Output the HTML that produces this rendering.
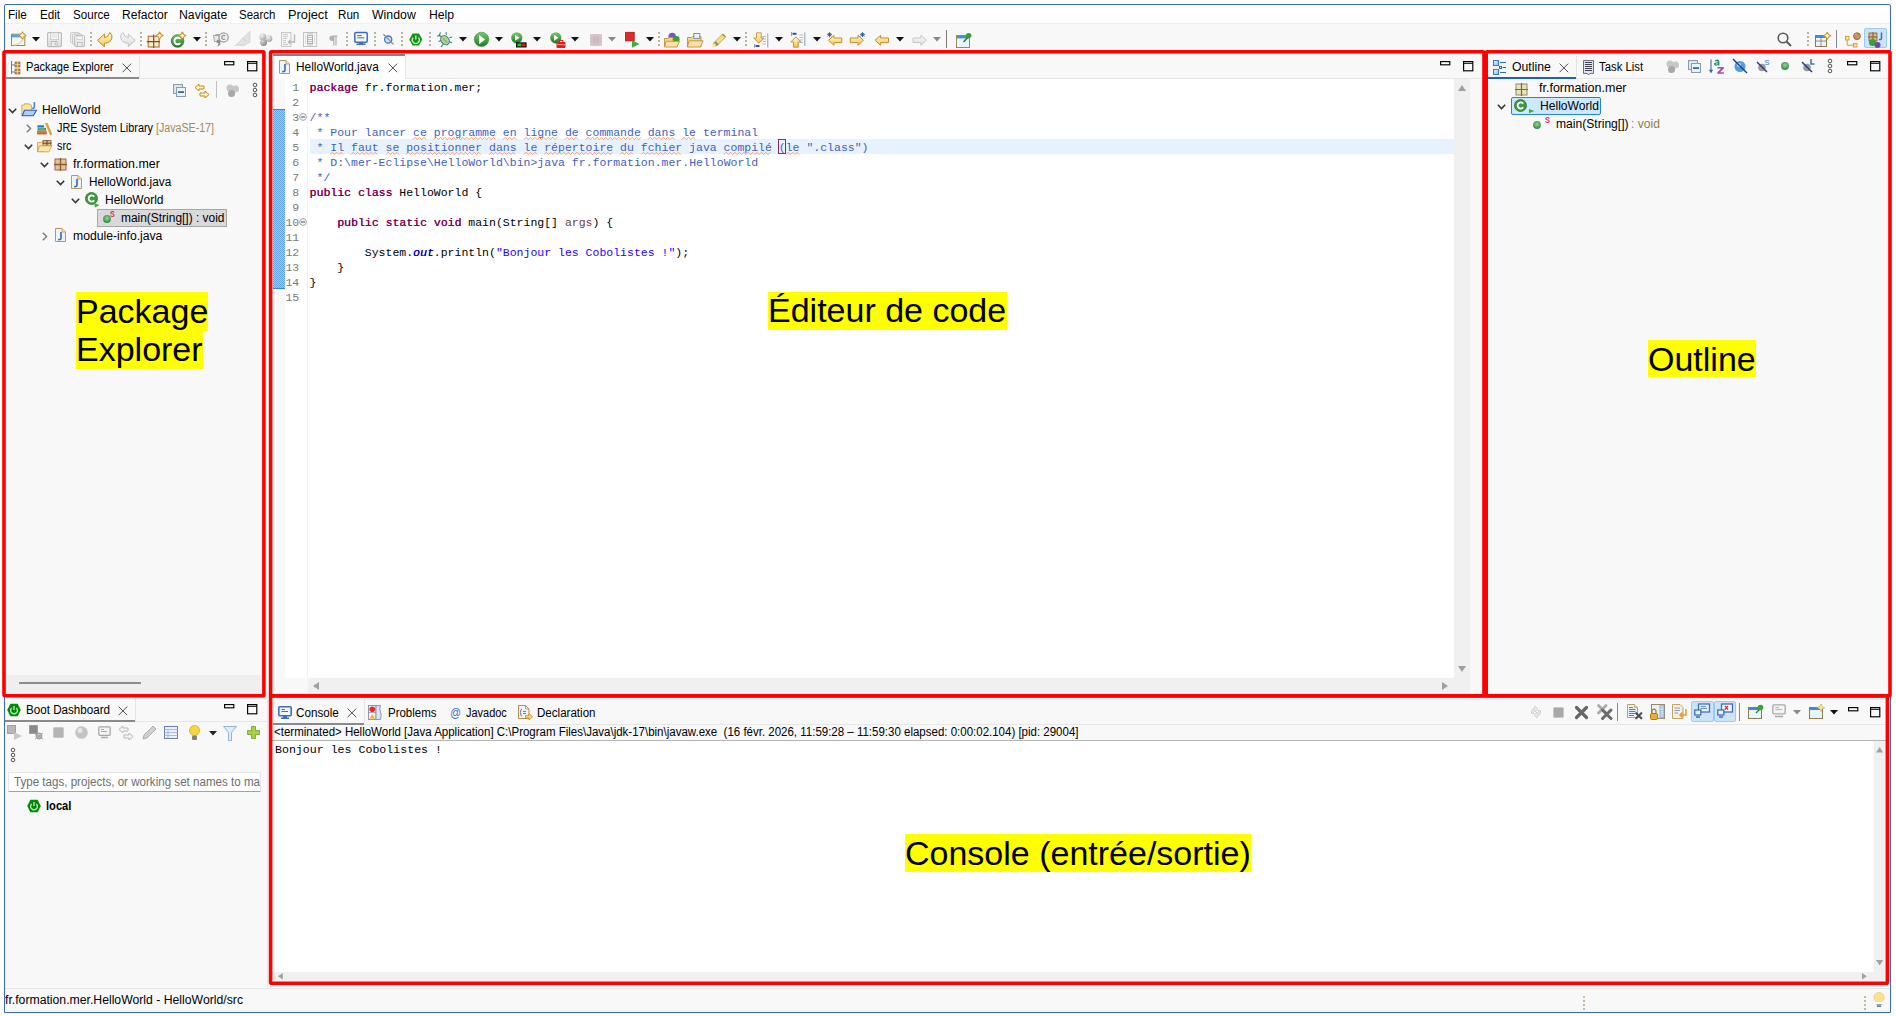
<!DOCTYPE html>
<html><head><meta charset="utf-8"><title>Eclipse</title>
<style>
html,body{margin:0;padding:0}
body{width:1896px;height:1016px;position:relative;overflow:hidden;background:#fff;font-family:'Liberation Sans',sans-serif}
.tx{position:absolute;white-space:pre;transform-origin:0 0}
svg{overflow:visible}
</style></head><body>
<div style="position:absolute;left:0px;top:0px;width:1896px;height:1016px;background:#fff;"></div>
<div style="position:absolute;left:5px;top:24px;width:1885px;height:988px;background:#f8f8f8;"></div>
<div style="position:absolute;left:5px;top:23px;width:1885px;height:1px;background:#efefef;"></div>
<div style="position:absolute;left:4px;top:4px;width:1887px;height:1009px;box-sizing:border-box;border:1px solid #3a6cb4;border-radius:2px 2px 0 0"></div>
<span id="t0" class="tx" style="transform:scaleX(0.9719);left:8.2px;top:7px;font-family:'Liberation Sans',sans-serif;font-size:12px;line-height:16px;color:#000;font-weight:normal;">File</span>
<span id="t1" class="tx" style="transform:scaleX(0.9716);left:39.7px;top:7px;font-family:'Liberation Sans',sans-serif;font-size:12px;line-height:16px;color:#000;font-weight:normal;">Edit</span>
<span id="t2" class="tx" style="transform:scaleX(0.9676);left:73.1px;top:7px;font-family:'Liberation Sans',sans-serif;font-size:12px;line-height:16px;color:#000;font-weight:normal;">Source</span>
<span id="t3" class="tx" style="transform:scaleX(1.0097);left:122.2px;top:7px;font-family:'Liberation Sans',sans-serif;font-size:12px;line-height:16px;color:#000;font-weight:normal;">Refactor</span>
<span id="t4" class="tx" style="transform:scaleX(1.0195);left:179.2px;top:7px;font-family:'Liberation Sans',sans-serif;font-size:12px;line-height:16px;color:#000;font-weight:normal;">Navigate</span>
<span id="t5" class="tx" style="transform:scaleX(0.9545);left:239.2px;top:7px;font-family:'Liberation Sans',sans-serif;font-size:12px;line-height:16px;color:#000;font-weight:normal;">Search</span>
<span id="t6" class="tx" style="transform:scaleX(1.0653);left:287.6px;top:7px;font-family:'Liberation Sans',sans-serif;font-size:12px;line-height:16px;color:#000;font-weight:normal;">Project</span>
<span id="t7" class="tx" style="transform:scaleX(0.9675);left:337.6px;top:7px;font-family:'Liberation Sans',sans-serif;font-size:12px;line-height:16px;color:#000;font-weight:normal;">Run</span>
<span id="t8" class="tx" style="transform:scaleX(1.0261);left:371.8px;top:7px;font-family:'Liberation Sans',sans-serif;font-size:12px;line-height:16px;color:#000;font-weight:normal;">Window</span>
<span id="t9" class="tx" style="transform:scaleX(1.0167);left:429.3px;top:7px;font-family:'Liberation Sans',sans-serif;font-size:12px;line-height:16px;color:#000;font-weight:normal;">Help</span>
<svg width="0" height="0" style="position:absolute"><defs><linearGradient id="gy" x1="0" y1="0" x2="0" y2="1"><stop offset="0" stop-color="#fff7d8"/><stop offset="1" stop-color="#f7c64a"/></linearGradient><linearGradient id="gg" x1="0" y1="0" x2="0" y2="1"><stop offset="0" stop-color="#7cc86a"/><stop offset="1" stop-color="#1f7a2a"/></linearGradient><linearGradient id="ggray" x1="0" y1="0" x2="0" y2="1"><stop offset="0" stop-color="#fafafa"/><stop offset="1" stop-color="#dcdcdc"/></linearGradient><radialGradient id="gball" cx="0.35" cy="0.3" r="0.8"><stop offset="0" stop-color="#f2f2f2"/><stop offset="1" stop-color="#a0a0a0"/></radialGradient><radialGradient id="gball2" cx="0.35" cy="0.3" r="0.8"><stop offset="0" stop-color="#d8d8d8"/><stop offset="1" stop-color="#7a7a7a"/></radialGradient></defs></svg>
<svg style="position:absolute;left:11px;top:32px" width="16" height="16" viewBox="0 0 16 16"><rect x="0.5" y="2.2" width="13.3" height="11.3" fill="#eef7fd" stroke="#9a8a5a" stroke-width="1"/><path d="M3 13 Q10 12.5 12.5 6" stroke="#f3dc90" stroke-width="1.6" fill="none"/><rect x="1" y="2.7" width="12.3" height="2.6" fill="#3f8fd6"/><path d="M1.5 4 H10" stroke="#7cc0f0" stroke-width=".8"/><path d="M11.4 -0.20000000000000018 Q12.3 2.5 15.0 3.4 Q12.3 4.3 11.4 7.0 Q10.5 4.3 7.800000000000001 3.4 Q10.5 2.5 11.4 -0.20000000000000018Z" fill="#fff6d0" stroke="#c49a3a" stroke-width="1.1" stroke-linejoin="round"/></svg>
<svg style="position:absolute;left:32px;top:37px" width="8" height="5" viewBox="0 0 8 5"><path d="M0 0 L8 0 L4 4.5Z" fill="#111"/></svg>
<svg style="position:absolute;left:47px;top:32px" width="16" height="16" viewBox="0 0 16 16"><rect x="0.6" y="0.6" width="13.8" height="14.2" rx="1.2" fill="url(#ggray)" stroke="#b9b9b9" stroke-width="1.1"/><rect x="3.4" y="0.8" width="7.9" height="6.9" fill="#f6f6f6" stroke="#c4c4c4" stroke-width=".8"/><path d="M4.8 2.8 H10 M4.8 4.8 H10" stroke="#d2d2d2" stroke-width=".7"/><rect x="4.2" y="9.5" width="5.8" height="5" fill="#eeeeee" stroke="#b4b4b4" stroke-width=".8"/><path d="M8.2 10.5 V13.5" stroke="#a8a8a8" stroke-width=".8"/></svg>
<svg style="position:absolute;left:70px;top:32px" width="16" height="16" viewBox="0 0 16 16"><rect x="0.6" y="0.6" width="9" height="10" rx="1" fill="#f2f2f2" stroke="#c4c4c4" stroke-width=".9"/><rect x="2.6" y="2.1" width="9" height="10.5" rx="1" fill="#f2f2f2" stroke="#c0c0c0" stroke-width=".9"/><rect x="4.6" y="3.6" width="10" height="11" rx="1" fill="url(#ggray)" stroke="#b4b4b4" stroke-width=".9"/><rect x="7" y="4" width="5.5" height="3.6" fill="#f8f8f8" stroke="#c4c4c4" stroke-width=".7"/><rect x="7.6" y="10.6" width="4.4" height="3.8" fill="#eee" stroke="#b4b4b4" stroke-width=".7"/></svg>
<svg style="position:absolute;left:90px;top:32.4px" width="2" height="16" viewBox="0 0 2 16"><rect x="0" y="0" width="2" height="2" fill="#bdb29c"/><rect x="0" y="4" width="2" height="2" fill="#bdb29c"/><rect x="0" y="8" width="2" height="2" fill="#bdb29c"/><rect x="0" y="12" width="2" height="2" fill="#bdb29c"/></svg>
<svg style="position:absolute;left:97px;top:32px" width="16" height="16" viewBox="0 0 16 16"><path d="M0.5 8.4 L7.4 2 V5.6 Q11 6 12.8 0.5 Q15.6 2 14.9 6.2 Q13.8 10.8 7.4 11.3 V14.7 Z" fill="url(#gy)" stroke="#bf8a28" stroke-width="1" stroke-linejoin="round"/></svg>
<svg style="position:absolute;left:119.5px;top:32px" width="16" height="16" viewBox="0 0 16 16"><path d="M15.2 8.4 L8.3 2 V5.6 Q4.7 6 2.9 0.5 Q0.1 2 0.8 6.2 Q1.9 10.8 8.3 11.3 V14.7 Z" fill="url(#ggray)" stroke="#c2c2c2" stroke-width="1" stroke-linejoin="round"/></svg>
<svg style="position:absolute;left:140px;top:32.4px" width="2" height="16" viewBox="0 0 2 16"><rect x="0" y="0" width="2" height="2" fill="#bdb29c"/><rect x="0" y="4" width="2" height="2" fill="#bdb29c"/><rect x="0" y="8" width="2" height="2" fill="#bdb29c"/><rect x="0" y="12" width="2" height="2" fill="#bdb29c"/></svg>
<svg style="position:absolute;left:147px;top:32px" width="16" height="16" viewBox="0 0 16 16"><rect x="1.2" y="4.2" width="11" height="10.8" fill="#ecd7a8" stroke="#b5784a" stroke-width="1.1"/><rect x="2.5" y="5.5" width="3.6" height="3.6" fill="#fbeec6"/><rect x="7.4" y="5.5" width="3.6" height="3.6" fill="#fbeec6"/><rect x="2.5" y="10.3" width="3.6" height="3.6" fill="#fbeec6"/><rect x="7.4" y="10.3" width="3.6" height="3.6" fill="#fbeec6"/><path d="M6.7 2.5 V16 M-0.2 9.6 H13" stroke="#7d4a28" stroke-width="1.1"/><path d="M12.6 0.0 Q13.5 2.7 16.2 3.6 Q13.5 4.5 12.6 7.2 Q11.7 4.5 9.0 3.6 Q11.7 2.7 12.6 0.0Z" fill="#fff6d0" stroke="#c49a3a" stroke-width="1.1" stroke-linejoin="round"/></svg>
<svg style="position:absolute;left:170px;top:32px" width="16" height="16" viewBox="0 0 16 16"><circle cx="7.6" cy="9" r="6.3" fill="url(#gg)" stroke="#1f6a2a" stroke-width=".7"/><path d="M10.3 6.9 A3.3 3.3 0 1 0 10.3 11.1" stroke="#fff" stroke-width="2" fill="none"/><path d="M12.3 0.0 Q13.200000000000001 2.7 15.9 3.6 Q13.200000000000001 4.5 12.3 7.2 Q11.4 4.5 8.700000000000001 3.6 Q11.4 2.7 12.3 0.0Z" fill="#fff6d0" stroke="#c49a3a" stroke-width="1.1" stroke-linejoin="round"/></svg>
<svg style="position:absolute;left:192.5px;top:37px" width="8" height="5" viewBox="0 0 8 5"><path d="M0 0 L8 0 L4 4.5Z" fill="#111"/></svg>
<svg style="position:absolute;left:204.7px;top:32.4px" width="2" height="16" viewBox="0 0 2 16"><rect x="0" y="0" width="2" height="2" fill="#bdb29c"/><rect x="0" y="4" width="2" height="2" fill="#bdb29c"/><rect x="0" y="8" width="2" height="2" fill="#bdb29c"/><rect x="0" y="12" width="2" height="2" fill="#bdb29c"/></svg>
<svg style="position:absolute;left:212.6px;top:32px" width="16" height="16" viewBox="0 0 16 16"><path d="M0.5 3.5 H6 V9.5 H1.5Z" fill="#e8e8e8" stroke="#a6a6a6" stroke-width="1"/><path d="M1 4 L3 2.5 H7" stroke="#a6a6a6" fill="none"/><path d="M4 8 H9 L6.5 11.5 H8.5 L4.5 15 L5.5 11 H3.5Z" fill="#8c8c8c"/><circle cx="10.6" cy="5.4" r="4.6" fill="#f2f2f2" stroke="#a0a0a0" stroke-width="1.3"/><path d="M12.2 4 A2 2 0 1 0 12.2 6.8" stroke="#909090" stroke-width="1.2" fill="none"/></svg>
<svg style="position:absolute;left:234px;top:31px" width="17" height="16" viewBox="0 0 17 16"><path d="M2 13.8 L9 7 L16 0 V11 L11 14 Z" fill="#e2e2e2" stroke="#d2d2d2" stroke-width=".8"/><path d="M0 14.3 H11" stroke="#dadada" stroke-width="1"/><path d="M9 7 L12 10.5" stroke="#cfcfcf"/></svg>
<svg style="position:absolute;left:258.8px;top:33px" width="14" height="14" viewBox="0 0 14 14"><circle cx="3.8" cy="4" r="3.4" fill="url(#gball)"/><circle cx="10" cy="5.6" r="3.4" fill="url(#gball)"/><circle cx="4.6" cy="9.6" r="3.4" fill="url(#gball2)"/></svg>
<svg style="position:absolute;left:280.6px;top:32px" width="16" height="16" viewBox="0 0 16 16"><rect x="0.5" y="0.5" width="9.5" height="14" fill="#f6f6f6" stroke="#c6c6c6"/><path d="M2 2.5 H7 M2 4.5 H7 M2 6.5 H6 M2 8.5 H5 M2 10.5 H5 M2 12.5 H7" stroke="#bdbdbd" stroke-width=".8"/><path d="M13.5 2.5 V10 H7.5 M9.5 8 L7.5 10 L9.5 12" stroke="#b8b8b8" stroke-width="1.4" fill="none"/></svg>
<svg style="position:absolute;left:303px;top:32px" width="16" height="16" viewBox="0 0 16 16"><rect x="0.5" y="0.5" width="13.2" height="14" fill="#f7f7f7" stroke="#c4c4c4"/><path d="M2.5 2.5 V12.5 M11.5 2.5 V12.5" stroke="#c8c8c8" stroke-dasharray="1 1"/><rect x="4.5" y="3.5" width="5" height="8" fill="none" stroke="#b0b0b0"/><path d="M5 5.5 H9 M5 7.5 H9 M5 9.5 H9" stroke="#bdbdbd"/><path d="M4 1.8 H10 M4 13 H10" stroke="#c0c0c0"/></svg>
<svg style="position:absolute;left:328.5px;top:34.8px" width="9" height="11" viewBox="0 0 9 11"><path d="M4.2 0.5 H8.5 V1.8 H7.6 V10.5 H6.4 V1.8 H5.4 V10.5 H4.2 V6 Q0.3 6 0.3 3.2 Q0.3 0.5 4.2 0.5Z" fill="#b2b2b2"/></svg>
<svg style="position:absolute;left:345.8px;top:32.4px" width="2" height="16" viewBox="0 0 2 16"><rect x="0" y="0" width="2" height="2" fill="#bdb29c"/><rect x="0" y="4" width="2" height="2" fill="#bdb29c"/><rect x="0" y="8" width="2" height="2" fill="#bdb29c"/><rect x="0" y="12" width="2" height="2" fill="#bdb29c"/></svg>
<svg style="position:absolute;left:354px;top:32px" width="16" height="16" viewBox="0 0 16 16"><rect x="0.8" y="0.6" width="12.4" height="9.6" rx="1.2" fill="#f4f8fd" stroke="#3d6db8" stroke-width="1.5"/><path d="M3.2 3.6 H7.8 M3.2 5.8 H10.3" stroke="#3d6db8" stroke-width="1"/><path d="M5 10.2 H9 V11.6 H11.5 V13 H2.5 V11.6 H5Z" fill="#3d6db8"/></svg>
<svg style="position:absolute;left:373.5px;top:32.4px" width="2" height="16" viewBox="0 0 2 16"><rect x="0" y="0" width="2" height="2" fill="#bdb29c"/><rect x="0" y="4" width="2" height="2" fill="#bdb29c"/><rect x="0" y="8" width="2" height="2" fill="#bdb29c"/><rect x="0" y="12" width="2" height="2" fill="#bdb29c"/></svg>
<svg style="position:absolute;left:382px;top:32px" width="16" height="16" viewBox="0 0 16 16"><circle cx="6.2" cy="7.6" r="3.6" fill="#d6e8f8" stroke="#3a7ac0" stroke-width="1.3"/><path d="M1.4 2.3 L11.5 12.4" stroke="#8a8a8a" stroke-width="1.3"/></svg>
<svg style="position:absolute;left:401px;top:32.4px" width="2" height="16" viewBox="0 0 2 16"><rect x="0" y="0" width="2" height="2" fill="#bdb29c"/><rect x="0" y="4" width="2" height="2" fill="#bdb29c"/><rect x="0" y="8" width="2" height="2" fill="#bdb29c"/><rect x="0" y="12" width="2" height="2" fill="#bdb29c"/></svg>
<svg style="position:absolute;left:409px;top:32.7px" width="14" height="14" viewBox="0 0 14 14"><path d="M0.3 6.5 L3.6 0.6 H10 L13.3 6.5 L10 12.6 H3.6Z" fill="#139413"/><path d="M4.2 4.6 A3.5 3.5 0 1 0 9.4 4.6" stroke="#cdf0cd" stroke-width="1.3" fill="none"/><path d="M6.8 2.6 V6.6" stroke="#cdf0cd" stroke-width="1.3"/></svg>
<svg style="position:absolute;left:428.5px;top:32.4px" width="2" height="16" viewBox="0 0 2 16"><rect x="0" y="0" width="2" height="2" fill="#bdb29c"/><rect x="0" y="4" width="2" height="2" fill="#bdb29c"/><rect x="0" y="8" width="2" height="2" fill="#bdb29c"/><rect x="0" y="12" width="2" height="2" fill="#bdb29c"/></svg>
<svg style="position:absolute;left:437px;top:32px" width="16" height="16" viewBox="0 0 16 16"><ellipse cx="8" cy="8.2" rx="3.8" ry="5" transform="rotate(-40 8 8.2)" fill="#b5d68a" stroke="#2f7f80" stroke-width="1"/><path d="M6 6 L10 10.5" stroke="#7fb060" stroke-width="1.2"/><path d="M4.3 4.6 L2.2 3.4 L0.2 4.2 M4.2 8.5 L1.6 9.6 M6 12.2 L4 15 M9.4 2.8 L9 0.2 M12.4 5.8 L15 5 M12.3 9.4 L14.8 11 M2.2 3.4 L3.5 0.6" stroke="#2f7f80" stroke-width="1.1" fill="none"/></svg>
<svg style="position:absolute;left:458.5px;top:37px" width="8" height="5" viewBox="0 0 8 5"><path d="M0 0 L8 0 L4 4.5Z" fill="#111"/></svg>
<svg style="position:absolute;left:474.4px;top:31.8px" width="16" height="16" viewBox="0 0 16 16"><circle cx="7.5" cy="7.4" r="7.2" fill="url(#gg)" stroke="#2a7a2a" stroke-width=".5"/><path d="M5 3 L11.2 7.6 L5 12.2Z" fill="#fff"/></svg>
<svg style="position:absolute;left:495px;top:37px" width="8" height="5" viewBox="0 0 8 5"><path d="M0 0 L8 0 L4 4.5Z" fill="#111"/></svg>
<svg style="position:absolute;left:511px;top:32px" width="16" height="16" viewBox="0 0 16 16"><circle cx="5.8" cy="5.8" r="5.6" fill="url(#gg)"/><path d="M4 2.8 L8.6 5.8 L4 8.8Z" fill="#fff"/><rect x="5" y="10.3" width="10.6" height="5.2" fill="#111"/><rect x="6.3" y="11.5" width="4" height="2.8" fill="#25c025"/><rect x="10.6" y="11.5" width="3.8" height="2.8" fill="#e01a1a"/></svg>
<svg style="position:absolute;left:533.2px;top:37px" width="8" height="5" viewBox="0 0 8 5"><path d="M0 0 L8 0 L4 4.5Z" fill="#111"/></svg>
<svg style="position:absolute;left:549.5px;top:32px" width="16" height="16" viewBox="0 0 16 16"><circle cx="5.8" cy="5.8" r="5.6" fill="url(#gg)"/><path d="M4 2.8 L8.6 5.8 L4 8.8Z" fill="#fff"/><rect x="6.5" y="10" width="9" height="6" rx="1" fill="#e41c1c"/><path d="M7 12.6 H15" stroke="#ffb0b0" stroke-width=".8"/><rect x="9.5" y="8.4" width="3.4" height="2.2" fill="none" stroke="#e41c1c" stroke-width="1"/></svg>
<svg style="position:absolute;left:571px;top:37px" width="8" height="5" viewBox="0 0 8 5"><path d="M0 0 L8 0 L4 4.5Z" fill="#111"/></svg>
<svg style="position:absolute;left:589.5px;top:34px" width="12" height="12" viewBox="0 0 12 12"><rect x="0.8" y="0.8" width="10.4" height="10.4" fill="#d8c8cc" stroke="#c6b8bc" stroke-width="1"/><rect x="2.5" y="2.5" width="7" height="7" fill="#cdb8bd"/></svg>
<svg style="position:absolute;left:608px;top:37px" width="8" height="5" viewBox="0 0 8 5"><path d="M0 0 L8 0 L4 4.5Z" fill="#8a8a8a"/></svg>
<svg style="position:absolute;left:624.5px;top:32px" width="16" height="16" viewBox="0 0 16 16"><rect x="0.6" y="0.3" width="8.6" height="8.6" fill="#e02a2a" stroke="#a81616" stroke-width=".8"/><path d="M7 8.2 L14.5 12 L7 15.8Z" fill="#3ab03a"/></svg>
<svg style="position:absolute;left:645.5px;top:37px" width="8" height="5" viewBox="0 0 8 5"><path d="M0 0 L8 0 L4 4.5Z" fill="#111"/></svg>
<svg style="position:absolute;left:657.7px;top:32.4px" width="2" height="16" viewBox="0 0 2 16"><rect x="0" y="0" width="2" height="2" fill="#bdb29c"/><rect x="0" y="4" width="2" height="2" fill="#bdb29c"/><rect x="0" y="8" width="2" height="2" fill="#bdb29c"/><rect x="0" y="12" width="2" height="2" fill="#bdb29c"/></svg>
<svg style="position:absolute;left:664px;top:32px" width="16" height="16" viewBox="0 0 16 16"><circle cx="8.2" cy="4.5" r="3.8" fill="#7a5ab8"/><circle cx="12.4" cy="7.2" r="3.2" fill="#3aa03a"/><path d="M0.5 6.5 H4.5 L5.5 5.5 H9 V14.5 H0.5Z" fill="#f5d590" stroke="#b8862a" stroke-width=".8"/><path d="M2 9.3 H15.5 L13 15 H0.5Z" fill="#fbe3a4" stroke="#b8862a" stroke-width=".8"/></svg>
<svg style="position:absolute;left:686.5px;top:32px" width="16" height="16" viewBox="0 0 16 16"><path d="M0.5 5.5 H4.5 L5.5 4.5 H14 V14.5 H0.5Z" fill="#f5d590" stroke="#b8862a" stroke-width=".8"/><rect x="6.8" y="1.5" width="6" height="4.8" fill="#eef4fb" stroke="#6a86b8" stroke-width=".9"/><path d="M2 8.8 H16 L13.5 15 H0.5Z" fill="#fbe3a4" stroke="#b8862a" stroke-width=".8"/></svg>
<svg style="position:absolute;left:710.5px;top:32px" width="16" height="16" viewBox="0 0 16 16"><path d="M1.5 14.5 L3 10.5 L11.5 2 L14.5 5 L6 13.5Z" fill="#f3dc8a" stroke="#c8a040" stroke-width=".9"/><path d="M4 10 L7 13" stroke="#8a8a8a" stroke-width="2.2"/><path d="M11.5 2 L14.5 5" stroke="#b48a30" stroke-width="1.4"/><circle cx="2" cy="14" r="2" fill="#fff6b0" opacity=".8"/></svg>
<svg style="position:absolute;left:732.5px;top:37px" width="8" height="5" viewBox="0 0 8 5"><path d="M0 0 L8 0 L4 4.5Z" fill="#111"/></svg>
<svg style="position:absolute;left:745px;top:32.4px" width="2" height="16" viewBox="0 0 2 16"><rect x="0" y="0" width="2" height="2" fill="#bdb29c"/><rect x="0" y="4" width="2" height="2" fill="#bdb29c"/><rect x="0" y="8" width="2" height="2" fill="#bdb29c"/><rect x="0" y="12" width="2" height="2" fill="#bdb29c"/></svg>
<svg style="position:absolute;left:754px;top:32px" width="16" height="16" viewBox="0 0 16 16"><path d="M2.5 0.8 H7.2 V6 H10 L4.9 11.2 L-0.2 6 H2.5Z" fill="url(#gy)" stroke="#c28f2a" stroke-width=".9"/><path d="M8.5 4.5 H12 M8.5 7 H12 M8.5 9.5 H12 M8.5 12 H12" stroke="#9ab0c8" stroke-width=".8"/><path d="M13.8 1.5 V15.5" stroke="#8aa0b8" stroke-width="1"/><rect x="1.5" y="13" width="4" height="2" fill="#1f5aa0"/><path d="M0.5 12 V15.5" stroke="#8aa0b8"/></svg>
<svg style="position:absolute;left:775px;top:37px" width="8" height="5" viewBox="0 0 8 5"><path d="M0 0 L8 0 L4 4.5Z" fill="#111"/></svg>
<svg style="position:absolute;left:790.5px;top:32px" width="16" height="16" viewBox="0 0 16 16"><path d="M2.5 15.2 H7.2 V10 H10 L4.9 4.8 L-0.2 10 H2.5Z" fill="url(#gy)" stroke="#c28f2a" stroke-width=".9"/><path d="M8.5 3 H12 M8.5 5.5 H12 M8.5 8 H12 M8.5 10.5 H12" stroke="#9ab0c8" stroke-width=".8"/><path d="M13.8 0.5 V14" stroke="#8aa0b8" stroke-width="1"/><rect x="1.5" y="0.8" width="4" height="2" fill="#1f5aa0"/><path d="M0.5 0 V4" stroke="#8aa0b8"/></svg>
<svg style="position:absolute;left:812.5px;top:37px" width="8" height="5" viewBox="0 0 8 5"><path d="M0 0 L8 0 L4 4.5Z" fill="#111"/></svg>
<svg style="position:absolute;left:826.5px;top:32px" width="16" height="16" viewBox="0 0 16 16"><path d="M1.5 8.3 L7 3.3 V6 H14.8 V10.6 H7 V13.3Z" fill="url(#gy)" stroke="#c28f2a" stroke-width="1" stroke-linejoin="round"/><path d="M0.8 1 L4.2 4.4 M4.2 1 L0.8 4.4 M2.5 0.2 V5.2 M0 2.7 H5" stroke="#2a5a9a" stroke-width=".9"/></svg>
<svg style="position:absolute;left:849px;top:32px" width="16" height="16" viewBox="0 0 16 16"><path d="M14.5 8.3 L9 3.3 V6 H1.2 V10.6 H9 V13.3Z" fill="url(#gy)" stroke="#c28f2a" stroke-width="1" stroke-linejoin="round"/><path d="M11.8 1 L15.2 4.4 M15.2 1 L11.8 4.4 M13.5 0.2 V5.2 M11 2.7 H16" stroke="#2a5a9a" stroke-width=".9"/></svg>
<svg style="position:absolute;left:873.5px;top:32px" width="16" height="16" viewBox="0 0 16 16"><path d="M1 8.3 L6.6 3.3 V6 H14.5 V10.6 H6.6 V13.3Z" fill="url(#gy)" stroke="#c28f2a" stroke-width="1" stroke-linejoin="round"/></svg>
<svg style="position:absolute;left:895.5px;top:37px" width="8" height="5" viewBox="0 0 8 5"><path d="M0 0 L8 0 L4 4.5Z" fill="#111"/></svg>
<svg style="position:absolute;left:911.5px;top:32px" width="16" height="16" viewBox="0 0 16 16"><path d="M14.5 8.3 L8.9 3.3 V6 H1 V10.6 H8.9 V13.3Z" fill="url(#ggray)" stroke="#c6c6c6" stroke-width="1" stroke-linejoin="round"/></svg>
<svg style="position:absolute;left:932.5px;top:37px" width="8" height="5" viewBox="0 0 8 5"><path d="M0 0 L8 0 L4 4.5Z" fill="#8a8a8a"/></svg>
<div style="position:absolute;left:946px;top:30px;width:1px;height:18px;background:#7a7a7a;"></div>
<svg style="position:absolute;left:955.5px;top:32px" width="16" height="16" viewBox="0 0 16 16"><rect x="0.5" y="3.5" width="13" height="12" fill="#eaf4fc" stroke="#9a8a5a"/><rect x="1" y="4" width="12" height="2.4" fill="#3f8fd6"/><path d="M7.5 10 L12.2 5" stroke="#2a7a2a" stroke-width="1.4"/><ellipse cx="12.6" cy="3.6" rx="2.9" ry="2.6" fill="#35a035"/></svg>
<svg style="position:absolute;left:1777px;top:32px" width="16" height="16" viewBox="0 0 16 16"><circle cx="6" cy="6" r="4.8" fill="none" stroke="#5a5a5a" stroke-width="1.6"/><path d="M9.5 9.5 L14 14" stroke="#5a5a5a" stroke-width="2"/></svg>
<svg style="position:absolute;left:1807px;top:32.4px" width="2" height="16" viewBox="0 0 2 16"><rect x="0" y="0" width="2" height="2" fill="#bdb29c"/><rect x="0" y="4" width="2" height="2" fill="#bdb29c"/><rect x="0" y="8" width="2" height="2" fill="#bdb29c"/><rect x="0" y="12" width="2" height="2" fill="#bdb29c"/></svg>
<svg style="position:absolute;left:1815px;top:32px" width="16" height="16" viewBox="0 0 16 16"><rect x="0.5" y="3.5" width="11" height="11" fill="#eaf4fc" stroke="#8a7a50"/><rect x="1" y="4" width="10" height="2" fill="#3f8fd6"/><path d="M0.5 9 H11.5 M6 6 V14.5" stroke="#8a7a50" stroke-width=".8"/><path d="M12.2 0.19999999999999973 Q13.1 2.9 15.799999999999999 3.8 Q13.1 4.7 12.2 7.4 Q11.299999999999999 4.7 8.6 3.8 Q11.299999999999999 2.9 12.2 0.19999999999999973Z" fill="#fff6d0" stroke="#c49a3a" stroke-width="1.1" stroke-linejoin="round"/></svg>
<div style="position:absolute;left:1836px;top:30px;width:1px;height:18px;background:#8a8a8a;"></div>
<svg style="position:absolute;left:1845px;top:32px" width="16" height="16" viewBox="0 0 16 16"><rect x="0.5" y="4.5" width="3.5" height="3.5" fill="#fde18a" stroke="#c8952a" stroke-width=".8"/><rect x="8.5" y="11.5" width="3.5" height="3.5" fill="#fde18a" stroke="#c8952a" stroke-width=".8"/><path d="M2.2 8 V13.2 H8.5" stroke="#c8952a" stroke-width=".9" fill="none"/><ellipse cx="12" cy="4.2" rx="3.5" ry="3.5" fill="#c88a50" stroke="#8a5a2a" stroke-width=".7"/><path d="M9.8 2 L14 6.5 M10.5 1.2 L14.8 5.5" stroke="#e8b888" stroke-width=".5"/></svg>
<div style="position:absolute;left:1864.4px;top:27.9px;width:22.2px;height:20.1px;box-sizing:border-box;background:#cce4f7;border:1px solid #99ccf2;border-radius:2px"></div>
<svg style="position:absolute;left:1868px;top:32px" width="16" height="16" viewBox="0 0 16 16"><rect x="1" y="1" width="8" height="8" fill="#d8b88a" stroke="#8a5a2a" stroke-width=".8"/><path d="M5 0 V9 M0 5 H9" stroke="#8a5a2a" stroke-width="1"/><path d="M13.5 0.5 V6 Q13.5 8 11 7.5" stroke="#3a70c0" stroke-width="1.5" fill="none"/><circle cx="4.5" cy="10.5" r="3.5" fill="#3aa03a"/><circle cx="9.5" cy="13" r="3" fill="#6a4ab0"/></svg>
<div style="position:absolute;left:5px;top:78px;width:257px;height:1px;background:#e6e6e6;"></div>
<div style="position:absolute;left:139px;top:56px;width:1px;height:22px;background:#e4e4e4;"></div>
<div style="position:absolute;left:6px;top:77px;width:133px;height:2px;background:#8a8a8a;"></div>
<svg style="position:absolute;left:10px;top:60px" width="10" height="13" viewBox="0 0 10 13"><path d="M1.5 1 V14 M1.5 5 H5 M1.5 12 H5" stroke="#6b7b90" stroke-width="1" fill="none"/><rect x="5" y="2" width="5" height="5" fill="#c78a4a" stroke="#8f5a28" stroke-width=".6"/><rect x="5" y="9" width="5" height="5" fill="#c78a4a" stroke="#8f5a28" stroke-width=".6"/><path d="M7.5 2 V7 M5 4.5 H10 M7.5 9 V14 M5 11.5 H10" stroke="#f3d8a8" stroke-width=".7"/></svg>
<span id="t10" class="tx" style="transform:scaleX(0.9238);left:25.5px;top:59px;font-family:'Liberation Sans',sans-serif;font-size:12px;line-height:16px;color:#000;font-weight:normal;">Package Explorer</span>
<svg style="position:absolute;left:122px;top:63.1px" width="10" height="10" viewBox="0 0 10 10"><path d="M0.6 0.6 L9.2 9.2 M9.2 0.6 L0.6 9.2" stroke="#444" stroke-width="0.95" fill="none"/></svg>
<svg style="position:absolute;left:224px;top:61px" width="11" height="5" viewBox="0 0 11 5"><rect x="0.6" y="0.6" width="9.2" height="3.2" fill="#fff" stroke="#000" stroke-width="1.15"/></svg>
<svg style="position:absolute;left:247px;top:61px" width="11" height="11" viewBox="0 0 11 11"><rect x="0.6" y="0.6" width="9.2" height="9.2" fill="#f8f8f8" stroke="#000" stroke-width="1.15"/><rect x="0.6" y="1.8" width="9.2" height="1" fill="#000"/></svg>
<svg style="position:absolute;left:173px;top:84px" width="13" height="13" viewBox="0 0 13 13"><rect x="0.5" y="0.5" width="9" height="9" fill="#dfe7ee" stroke="#8a9bb0"/><rect x="3.5" y="3.5" width="9" height="9" fill="#e8f3f6" stroke="#8a9bb0"/><rect x="5" y="7.3" width="6" height="1.6" fill="#1f5a99"/></svg>
<svg style="position:absolute;left:194px;top:83px" width="16" height="16" viewBox="0 0 16 16"><path d="M1 4.5 L5 1 V3 H10 V6 H5 V8Z" fill="#fff3c4" stroke="#c08a2a" stroke-width="1"/><path d="M15 11.5 L11 15 V13 H6 V10 H11 V8Z" fill="#fff3c4" stroke="#c08a2a" stroke-width="1"/></svg>
<div style="position:absolute;left:216px;top:81px;width:1px;height:17px;background:#bdbdbd;"></div>
<svg style="position:absolute;left:226px;top:84px" width="13" height="13" viewBox="0 0 13 13"><circle cx="4" cy="4" r="3.5" fill="#c8c8c8"/><circle cx="9.5" cy="5" r="3.5" fill="#c8c8c8"/><circle cx="5.5" cy="9.5" r="3.5" fill="#a8a8a8"/></svg>
<svg style="position:absolute;left:252px;top:82px" width="6" height="16" viewBox="0 0 6 16"><g fill="none" stroke="#555" stroke-width="1"><circle cx="3" cy="3" r="1.8"/><circle cx="3" cy="8" r="1.8"/><circle cx="3" cy="13" r="1.8"/></g></svg>
<svg style="position:absolute;left:8px;top:108px" width="9" height="6" viewBox="0 0 9 6"><path d="M0.8 0.8 L4.5 4.6 L8.2 0.8" fill="none" stroke="#333" stroke-width="1.5"/></svg>
<svg style="position:absolute;left:20.5px;top:102px" width="17" height="15" viewBox="0 0 17 15"><path d="M0.8 3 H3 L4 1.8 H8 L9 3 H10.5 V13.5 H0.8Z" fill="#fbe3a0" stroke="#c9a45a" stroke-width=".8"/><path d="M3 1.8 H8.5" stroke="#e8c070" stroke-width="1.2"/><path d="M3.5 8.2 H15.6 L12.2 13.8 H1.2Z" fill="#a8d4f8" stroke="#3558c0" stroke-width="1.1" stroke-linejoin="round"/><path d="M13.4 0 V4.8 Q13.4 6.6 11 6.3" stroke="#5a8ac8" stroke-width="1.7" fill="none"/></svg>
<span id="t11" class="tx" style="transform:scaleX(1.0057);left:41.5px;top:102px;font-family:'Liberation Sans',sans-serif;font-size:12px;line-height:16px;color:#000;font-weight:normal;">HelloWorld</span>
<svg style="position:absolute;left:25.6px;top:124px" width="6" height="9" viewBox="0 0 6 9"><path d="M0.8 0.8 L4.6 4.5 L0.8 8.2" fill="none" stroke="#777" stroke-width="1.3"/></svg>
<svg style="position:absolute;left:37px;top:122.6px" width="15" height="13" viewBox="0 0 15 13"><rect x="0.3" y="2.3" width="6.8" height="2.2" rx=".6" fill="#2a7ad0"/><rect x="0.6" y="4.8" width="8.4" height="2.8" fill="#2aa060"/><path d="M1.5 6 H8" stroke="#9ad8b0" stroke-width=".6"/><rect x="0" y="7.6" width="9.8" height="3.8" fill="#d8783a"/><path d="M0.5 10.6 H9.5" stroke="#b05a20" stroke-width=".7"/><path d="M8.6 0.6 L10.2 0.2 L14.8 11.2 L13.4 11.8Z" fill="#f0b030" stroke="#c08020" stroke-width=".6"/></svg>
<span id="t12" class="tx" style="transform:scaleX(0.9054);left:57px;top:120px;font-family:'Liberation Sans',sans-serif;font-size:12px;line-height:16px;color:#000;font-weight:normal;">JRE System Library</span>
<span id="t13" class="tx" style="transform:scaleX(0.8872);left:155.5px;top:120px;font-family:'Liberation Sans',sans-serif;font-size:12px;line-height:16px;color:#9e8a63;font-weight:normal;">[JavaSE-17]</span>
<svg style="position:absolute;left:24px;top:144px" width="9" height="6" viewBox="0 0 9 6"><path d="M0.8 0.8 L4.5 4.6 L8.2 0.8" fill="none" stroke="#333" stroke-width="1.5"/></svg>
<svg style="position:absolute;left:37.2px;top:140.2px" width="15" height="13" viewBox="0 0 15 13"><path d="M0.5 2.5 H4 L5 1.5 H7 V11.5 H0.5Z" fill="#fbe3a4" stroke="#c59a48" stroke-width=".8"/><rect x="6" y="0.5" width="8" height="5.5" fill="#dcc08a" stroke="#8a5a30" stroke-width=".8"/><path d="M10 0 V6.5 M5.5 3.2 H14.5" stroke="#6a4020" stroke-width="1"/><path d="M2.5 5.8 H14.8 L12 11.8 H0.5Z" fill="#fde6ac" stroke="#c59a48" stroke-width=".8" stroke-linejoin="round"/></svg>
<span id="t14" class="tx" style="transform:scaleX(0.9062);left:57px;top:138px;font-family:'Liberation Sans',sans-serif;font-size:12px;line-height:16px;color:#000;font-weight:normal;">src</span>
<svg style="position:absolute;left:40px;top:162px" width="9" height="6" viewBox="0 0 9 6"><path d="M0.8 0.8 L4.5 4.6 L8.2 0.8" fill="none" stroke="#333" stroke-width="1.5"/></svg>
<svg style="position:absolute;left:54px;top:158px" width="13" height="13" viewBox="0 0 13 13"><rect x="1" y="1" width="11" height="11" fill="#e2c49a" stroke="#a0683a" stroke-width="1"/><path d="M6.5 0 V13 M0 6.5 H13" stroke="#8c5a30" stroke-width="1.3"/></svg>
<span id="t15" class="tx" style="transform:scaleX(1.0329);left:73px;top:156px;font-family:'Liberation Sans',sans-serif;font-size:12px;line-height:16px;color:#000;font-weight:normal;">fr.formation.mer</span>
<svg style="position:absolute;left:56px;top:180px" width="9" height="6" viewBox="0 0 9 6"><path d="M0.8 0.8 L4.5 4.6 L8.2 0.8" fill="none" stroke="#333" stroke-width="1.5"/></svg>
<svg style="position:absolute;left:71px;top:175px" width="11" height="14" viewBox="0 0 11 14"><path d="M0.5 0.5 H7 L10.5 4 V13.5 H0.5Z" fill="#eef3fb" stroke="#b49a5a" stroke-width="1"/><path d="M7 0.5 V4 H10.5" fill="#f0e0b0" stroke="#b49a5a" stroke-width=".8"/><path d="M6 4 V10 Q6 12 3.2 11.5" stroke="#2f6db5" stroke-width="1.6" fill="none"/></svg>
<span id="t16" class="tx" style="transform:scaleX(0.9808);left:88.8px;top:174px;font-family:'Liberation Sans',sans-serif;font-size:12px;line-height:16px;color:#000;font-weight:normal;">HelloWorld.java</span>
<svg style="position:absolute;left:71px;top:198px" width="9" height="6" viewBox="0 0 9 6"><path d="M0.8 0.8 L4.5 4.6 L8.2 0.8" fill="none" stroke="#333" stroke-width="1.5"/></svg>
<svg style="position:absolute;left:84.5px;top:192px" width="15" height="15" viewBox="0 0 15 15"><circle cx="6.5" cy="6.5" r="6" fill="#3c9b3c" stroke="#2a702a" stroke-width=".8"/><path d="M9.2 4.6 A3.1 3.1 0 1 0 9.2 8.4" stroke="#fff" stroke-width="1.8" fill="none"/><path d="M9 11 L14.5 13 L10 15.5Z" fill="#3cae3c"/></svg>
<span id="t17" class="tx" style="left:105px;top:192px;font-family:'Liberation Sans',sans-serif;font-size:12px;line-height:16px;color:#000;font-weight:normal;">HelloWorld</span>
<div style="position:absolute;left:97px;top:209px;width:130px;height:18px;box-sizing:border-box;background:#d9d9d9;border:1px solid #a6a6a6"></div>
<svg style="position:absolute;left:103px;top:215px" width="9" height="9" viewBox="0 0 9 9"><defs><radialGradient id="gb" cx="0.5" cy="0.4" r="0.6"><stop offset="0" stop-color="#a6d08a"/><stop offset="1" stop-color="#1f8a4a"/></radialGradient></defs><circle cx="4" cy="4" r="3.9" fill="url(#gb)"/></svg>
<span id="t18" class="tx" style="transform:scaleX(0.7567);left:109.7px;top:207.2px;font-family:'Liberation Sans',sans-serif;font-size:9.5px;line-height:13px;color:#d8305a;font-weight:bold;">S</span>
<span id="t19" class="tx" style="transform:scaleX(0.9947);left:120.6px;top:210px;font-family:'Liberation Sans',sans-serif;font-size:12px;line-height:16px;color:#000;font-weight:normal;">main(String[]) : void</span>
<svg style="position:absolute;left:42px;top:232px" width="6" height="9" viewBox="0 0 6 9"><path d="M0.8 0.8 L4.6 4.5 L0.8 8.2" fill="none" stroke="#777" stroke-width="1.3"/></svg>
<svg style="position:absolute;left:55px;top:228px" width="11" height="14" viewBox="0 0 11 14"><path d="M0.5 0.5 H7 L10.5 4 V13.5 H0.5Z" fill="#eef3fb" stroke="#b49a5a" stroke-width="1"/><path d="M7 0.5 V4 H10.5" fill="#f0e0b0" stroke="#b49a5a" stroke-width=".8"/><path d="M6 4 V10 Q6 12 3.2 11.5" stroke="#2f6db5" stroke-width="1.6" fill="none"/></svg>
<span id="t20" class="tx" style="transform:scaleX(1.0152);left:73px;top:228px;font-family:'Liberation Sans',sans-serif;font-size:12px;line-height:16px;color:#000;font-weight:normal;">module-info.java</span>
<div style="position:absolute;left:6px;top:675px;width:256px;height:19px;background:#efefef;"></div>
<div style="position:absolute;left:19px;top:682px;width:122px;height:2px;background:#8c8c8c;"></div>
<div style="position:absolute;left:272px;top:54px;width:1210px;height:25px;background:#f8f8f8;"></div>
<div style="position:absolute;left:272px;top:78px;width:1210px;height:1px;background:#e6e6e6;"></div>
<div style="position:absolute;left:272.8px;top:54px;width:132px;height:25px;background:#fff;"></div>
<div style="position:absolute;left:272.8px;top:54px;width:132px;height:2px;background:#7f8486;"></div>
<div style="position:absolute;left:404.5px;top:56px;width:1px;height:22px;background:#e8e8e8;"></div>
<svg style="position:absolute;left:279px;top:60px" width="12" height="14" viewBox="0 0 12 14"><path d="M0.5 0.5 H7 L10.5 4 V13.5 H0.5Z" fill="#eef3fb" stroke="#b49a5a" stroke-width="1"/><path d="M7 0.5 V4 H10.5" fill="#f0e0b0" stroke="#b49a5a" stroke-width=".8"/><path d="M6 4 V10 Q6 12 3.2 11.5" stroke="#2f6db5" stroke-width="1.6" fill="none"/></svg>
<span id="t21" class="tx" style="transform:scaleX(0.9879);left:296px;top:59px;font-family:'Liberation Sans',sans-serif;font-size:12px;line-height:16px;color:#000;font-weight:normal;">HelloWorld.java</span>
<svg style="position:absolute;left:388px;top:63.2px" width="10" height="10" viewBox="0 0 10 10"><path d="M0.6 0.6 L9.2 9.2 M9.2 0.6 L0.6 9.2" stroke="#444" stroke-width="0.95" fill="none"/></svg>
<svg style="position:absolute;left:1440px;top:61px" width="11" height="5" viewBox="0 0 11 5"><rect x="0.6" y="0.6" width="9.2" height="3.2" fill="#fff" stroke="#000" stroke-width="1.15"/></svg>
<svg style="position:absolute;left:1463px;top:61px" width="11" height="11" viewBox="0 0 11 11"><rect x="0.6" y="0.6" width="9.2" height="9.2" fill="#f8f8f8" stroke="#000" stroke-width="1.15"/><rect x="0.6" y="1.8" width="9.2" height="1" fill="#000"/></svg>
<div style="position:absolute;left:272px;top:79px;width:1182px;height:599px;background:#fff;"></div>
<div style="position:absolute;left:272px;top:79px;width:13px;height:615px;background:#f8f8f8;"></div>
<div style="position:absolute;left:307px;top:79px;width:1px;height:599px;background:#f2f2f2;"></div>
<svg style="position:absolute;left:273px;top:109px" width="12" height="180"><defs><pattern id="qd" width="2" height="2" patternUnits="userSpaceOnUse"><rect width="2" height="2" fill="#a9cdf0"/><rect width="1" height="1" fill="#5fa0e0"/><rect x="1" y="1" width="1" height="1" fill="#5fa0e0"/></pattern></defs><rect width="12" height="180" fill="url(#qd)"/><rect width="12" height="1" fill="#3b86d8"/><rect y="179" width="12" height="1" fill="#3b86d8"/></svg>
<div style="position:absolute;left:310.3px;top:139px;width:1144px;height:15px;background:#e8f2fe;"></div>
<span id="t22" class="tx" style="left:292.3px;top:80px;font-family:'Liberation Mono',monospace;font-size:11.5px;line-height:15px;color:#787878;font-weight:normal;">1</span>
<span id="t23" class="tx" style="left:309.6px;top:80px;font-family:'Liberation Mono',monospace;font-size:11.5px;line-height:15px;color:#7f0055;font-weight:normal;text-shadow:0.25px 0 0 #7f0055;">package</span>
<span id="t24" class="tx" style="left:357.90000000000003px;top:80px;font-family:'Liberation Mono',monospace;font-size:11.5px;line-height:15px;color:#000;font-weight:normal;"> fr.formation.mer;</span>
<span id="t25" class="tx" style="left:292.3px;top:95px;font-family:'Liberation Mono',monospace;font-size:11.5px;line-height:15px;color:#787878;font-weight:normal;">2</span>
<span id="t26" class="tx" style="left:292.3px;top:110px;font-family:'Liberation Mono',monospace;font-size:11.5px;line-height:15px;color:#787878;font-weight:normal;">3</span>
<span id="t27" class="tx" style="left:309.6px;top:110px;font-family:'Liberation Mono',monospace;font-size:11.5px;line-height:15px;color:#3f5fbf;font-weight:normal;">/**</span>
<span id="t28" class="tx" style="left:292.3px;top:125px;font-family:'Liberation Mono',monospace;font-size:11.5px;line-height:15px;color:#787878;font-weight:normal;">4</span>
<span id="t29" class="tx" style="left:309.6px;top:125px;font-family:'Liberation Mono',monospace;font-size:11.5px;line-height:15px;color:#3f5fbf;font-weight:normal;"> * Pour lancer </span>
<span id="t30" class="tx" style="left:413.1px;top:125px;font-family:'Liberation Mono',monospace;font-size:11.5px;line-height:15px;color:#3f5fbf;font-weight:normal;">ce</span>
<svg style="position:absolute;left:413.1px;top:137.0px" width="14.8" height="3" viewBox="0 0 14.8 3"><polyline points="0.0 2.6 2.2 0.3 4.4 2.6 6.6 0.3 8.8 2.6 11.0 0.3 13.2 2.6" fill="none" stroke="#f39060" stroke-width="0.85"/></svg>
<span id="t31" class="tx" style="left:426.90000000000003px;top:125px;font-family:'Liberation Mono',monospace;font-size:11.5px;line-height:15px;color:#3f5fbf;font-weight:normal;"> </span>
<span id="t32" class="tx" style="left:433.8px;top:125px;font-family:'Liberation Mono',monospace;font-size:11.5px;line-height:15px;color:#3f5fbf;font-weight:normal;">programme</span>
<svg style="position:absolute;left:433.8px;top:137.0px" width="63.1" height="3" viewBox="0 0 63.1 3"><polyline points="0.0 2.6 2.2 0.3 4.4 2.6 6.6 0.3 8.8 2.6 11.0 0.3 13.2 2.6 15.4 0.3 17.6 2.6 19.8 0.3 22.0 2.6 24.2 0.3 26.4 2.6 28.6 0.3 30.8 2.6 33.0 0.3 35.2 2.6 37.4 0.3 39.6 2.6 41.8 0.3 44.0 2.6 46.2 0.3 48.4 2.6 50.6 0.3 52.8 2.6 55.0 0.3 57.2 2.6 59.4 0.3 61.6 2.6" fill="none" stroke="#f39060" stroke-width="0.85"/></svg>
<span id="t33" class="tx" style="left:495.90000000000003px;top:125px;font-family:'Liberation Mono',monospace;font-size:11.5px;line-height:15px;color:#3f5fbf;font-weight:normal;"> </span>
<span id="t34" class="tx" style="left:502.80000000000007px;top:125px;font-family:'Liberation Mono',monospace;font-size:11.5px;line-height:15px;color:#3f5fbf;font-weight:normal;">en</span>
<svg style="position:absolute;left:502.80000000000007px;top:137.0px" width="14.8" height="3" viewBox="0 0 14.8 3"><polyline points="0.0 2.6 2.2 0.3 4.4 2.6 6.6 0.3 8.8 2.6 11.0 0.3 13.2 2.6" fill="none" stroke="#f39060" stroke-width="0.85"/></svg>
<span id="t35" class="tx" style="left:516.6px;top:125px;font-family:'Liberation Mono',monospace;font-size:11.5px;line-height:15px;color:#3f5fbf;font-weight:normal;"> </span>
<span id="t36" class="tx" style="left:523.5px;top:125px;font-family:'Liberation Mono',monospace;font-size:11.5px;line-height:15px;color:#3f5fbf;font-weight:normal;">ligne</span>
<svg style="position:absolute;left:523.5px;top:137.0px" width="35.5" height="3" viewBox="0 0 35.5 3"><polyline points="0.0 2.6 2.2 0.3 4.4 2.6 6.6 0.3 8.8 2.6 11.0 0.3 13.2 2.6 15.4 0.3 17.6 2.6 19.8 0.3 22.0 2.6 24.2 0.3 26.4 2.6 28.6 0.3 30.8 2.6 33.0 0.3" fill="none" stroke="#f39060" stroke-width="0.85"/></svg>
<span id="t37" class="tx" style="left:558.0px;top:125px;font-family:'Liberation Mono',monospace;font-size:11.5px;line-height:15px;color:#3f5fbf;font-weight:normal;"> </span>
<span id="t38" class="tx" style="left:564.9000000000001px;top:125px;font-family:'Liberation Mono',monospace;font-size:11.5px;line-height:15px;color:#3f5fbf;font-weight:normal;">de</span>
<svg style="position:absolute;left:564.9000000000001px;top:137.0px" width="14.8" height="3" viewBox="0 0 14.8 3"><polyline points="0.0 2.6 2.2 0.3 4.4 2.6 6.6 0.3 8.8 2.6 11.0 0.3 13.2 2.6" fill="none" stroke="#f39060" stroke-width="0.85"/></svg>
<span id="t39" class="tx" style="left:578.7px;top:125px;font-family:'Liberation Mono',monospace;font-size:11.5px;line-height:15px;color:#3f5fbf;font-weight:normal;"> </span>
<span id="t40" class="tx" style="left:585.6px;top:125px;font-family:'Liberation Mono',monospace;font-size:11.5px;line-height:15px;color:#3f5fbf;font-weight:normal;">commande</span>
<svg style="position:absolute;left:585.6px;top:137.0px" width="56.2" height="3" viewBox="0 0 56.2 3"><polyline points="0.0 2.6 2.2 0.3 4.4 2.6 6.6 0.3 8.8 2.6 11.0 0.3 13.2 2.6 15.4 0.3 17.6 2.6 19.8 0.3 22.0 2.6 24.2 0.3 26.4 2.6 28.6 0.3 30.8 2.6 33.0 0.3 35.2 2.6 37.4 0.3 39.6 2.6 41.8 0.3 44.0 2.6 46.2 0.3 48.4 2.6 50.6 0.3 52.8 2.6 55.0 0.3" fill="none" stroke="#f39060" stroke-width="0.85"/></svg>
<span id="t41" class="tx" style="left:640.8000000000001px;top:125px;font-family:'Liberation Mono',monospace;font-size:11.5px;line-height:15px;color:#3f5fbf;font-weight:normal;"> </span>
<span id="t42" class="tx" style="left:647.7px;top:125px;font-family:'Liberation Mono',monospace;font-size:11.5px;line-height:15px;color:#3f5fbf;font-weight:normal;">dans</span>
<svg style="position:absolute;left:647.7px;top:137.0px" width="28.6" height="3" viewBox="0 0 28.6 3"><polyline points="0.0 2.6 2.2 0.3 4.4 2.6 6.6 0.3 8.8 2.6 11.0 0.3 13.2 2.6 15.4 0.3 17.6 2.6 19.8 0.3 22.0 2.6 24.2 0.3 26.4 2.6" fill="none" stroke="#f39060" stroke-width="0.85"/></svg>
<span id="t43" class="tx" style="left:675.3000000000001px;top:125px;font-family:'Liberation Mono',monospace;font-size:11.5px;line-height:15px;color:#3f5fbf;font-weight:normal;"> </span>
<span id="t44" class="tx" style="left:682.2px;top:125px;font-family:'Liberation Mono',monospace;font-size:11.5px;line-height:15px;color:#3f5fbf;font-weight:normal;">le</span>
<svg style="position:absolute;left:682.2px;top:137.0px" width="14.8" height="3" viewBox="0 0 14.8 3"><polyline points="0.0 2.6 2.2 0.3 4.4 2.6 6.6 0.3 8.8 2.6 11.0 0.3 13.2 2.6" fill="none" stroke="#f39060" stroke-width="0.85"/></svg>
<span id="t45" class="tx" style="left:696.0px;top:125px;font-family:'Liberation Mono',monospace;font-size:11.5px;line-height:15px;color:#3f5fbf;font-weight:normal;"> terminal</span>
<span id="t46" class="tx" style="left:292.3px;top:140px;font-family:'Liberation Mono',monospace;font-size:11.5px;line-height:15px;color:#787878;font-weight:normal;">5</span>
<span id="t47" class="tx" style="left:309.6px;top:140px;font-family:'Liberation Mono',monospace;font-size:11.5px;line-height:15px;color:#3f5fbf;font-weight:normal;"> * </span>
<span id="t48" class="tx" style="left:330.3px;top:140px;font-family:'Liberation Mono',monospace;font-size:11.5px;line-height:15px;color:#3f5fbf;font-weight:normal;">Il</span>
<svg style="position:absolute;left:330.3px;top:152.0px" width="14.8" height="3" viewBox="0 0 14.8 3"><polyline points="0.0 2.6 2.2 0.3 4.4 2.6 6.6 0.3 8.8 2.6 11.0 0.3 13.2 2.6" fill="none" stroke="#f39060" stroke-width="0.85"/></svg>
<span id="t49" class="tx" style="left:344.1px;top:140px;font-family:'Liberation Mono',monospace;font-size:11.5px;line-height:15px;color:#3f5fbf;font-weight:normal;"> </span>
<span id="t50" class="tx" style="left:351.0px;top:140px;font-family:'Liberation Mono',monospace;font-size:11.5px;line-height:15px;color:#3f5fbf;font-weight:normal;">faut</span>
<svg style="position:absolute;left:351.0px;top:152.0px" width="28.6" height="3" viewBox="0 0 28.6 3"><polyline points="0.0 2.6 2.2 0.3 4.4 2.6 6.6 0.3 8.8 2.6 11.0 0.3 13.2 2.6 15.4 0.3 17.6 2.6 19.8 0.3 22.0 2.6 24.2 0.3 26.4 2.6" fill="none" stroke="#f39060" stroke-width="0.85"/></svg>
<span id="t51" class="tx" style="left:378.6px;top:140px;font-family:'Liberation Mono',monospace;font-size:11.5px;line-height:15px;color:#3f5fbf;font-weight:normal;"> </span>
<span id="t52" class="tx" style="left:385.5px;top:140px;font-family:'Liberation Mono',monospace;font-size:11.5px;line-height:15px;color:#3f5fbf;font-weight:normal;">se</span>
<svg style="position:absolute;left:385.5px;top:152.0px" width="14.8" height="3" viewBox="0 0 14.8 3"><polyline points="0.0 2.6 2.2 0.3 4.4 2.6 6.6 0.3 8.8 2.6 11.0 0.3 13.2 2.6" fill="none" stroke="#f39060" stroke-width="0.85"/></svg>
<span id="t53" class="tx" style="left:399.3px;top:140px;font-family:'Liberation Mono',monospace;font-size:11.5px;line-height:15px;color:#3f5fbf;font-weight:normal;"> </span>
<span id="t54" class="tx" style="left:406.20000000000005px;top:140px;font-family:'Liberation Mono',monospace;font-size:11.5px;line-height:15px;color:#3f5fbf;font-weight:normal;">positionner</span>
<svg style="position:absolute;left:406.20000000000005px;top:152.0px" width="76.9" height="3" viewBox="0 0 76.9 3"><polyline points="0.0 2.6 2.2 0.3 4.4 2.6 6.6 0.3 8.8 2.6 11.0 0.3 13.2 2.6 15.4 0.3 17.6 2.6 19.8 0.3 22.0 2.6 24.2 0.3 26.4 2.6 28.6 0.3 30.8 2.6 33.0 0.3 35.2 2.6 37.4 0.3 39.6 2.6 41.8 0.3 44.0 2.6 46.2 0.3 48.4 2.6 50.6 0.3 52.8 2.6 55.0 0.3 57.2 2.6 59.4 0.3 61.6 2.6 63.8 0.3 66.0 2.6 68.2 0.3 70.4 2.6 72.6 0.3 74.8 2.6" fill="none" stroke="#f39060" stroke-width="0.85"/></svg>
<span id="t55" class="tx" style="left:482.1px;top:140px;font-family:'Liberation Mono',monospace;font-size:11.5px;line-height:15px;color:#3f5fbf;font-weight:normal;"> </span>
<span id="t56" class="tx" style="left:489.0px;top:140px;font-family:'Liberation Mono',monospace;font-size:11.5px;line-height:15px;color:#3f5fbf;font-weight:normal;">dans</span>
<svg style="position:absolute;left:489.0px;top:152.0px" width="28.6" height="3" viewBox="0 0 28.6 3"><polyline points="0.0 2.6 2.2 0.3 4.4 2.6 6.6 0.3 8.8 2.6 11.0 0.3 13.2 2.6 15.4 0.3 17.6 2.6 19.8 0.3 22.0 2.6 24.2 0.3 26.4 2.6" fill="none" stroke="#f39060" stroke-width="0.85"/></svg>
<span id="t57" class="tx" style="left:516.6px;top:140px;font-family:'Liberation Mono',monospace;font-size:11.5px;line-height:15px;color:#3f5fbf;font-weight:normal;"> </span>
<span id="t58" class="tx" style="left:523.5px;top:140px;font-family:'Liberation Mono',monospace;font-size:11.5px;line-height:15px;color:#3f5fbf;font-weight:normal;">le</span>
<svg style="position:absolute;left:523.5px;top:152.0px" width="14.8" height="3" viewBox="0 0 14.8 3"><polyline points="0.0 2.6 2.2 0.3 4.4 2.6 6.6 0.3 8.8 2.6 11.0 0.3 13.2 2.6" fill="none" stroke="#f39060" stroke-width="0.85"/></svg>
<span id="t59" class="tx" style="left:537.3000000000001px;top:140px;font-family:'Liberation Mono',monospace;font-size:11.5px;line-height:15px;color:#3f5fbf;font-weight:normal;"> </span>
<span id="t60" class="tx" style="left:544.2px;top:140px;font-family:'Liberation Mono',monospace;font-size:11.5px;line-height:15px;color:#3f5fbf;font-weight:normal;">répertoire</span>
<svg style="position:absolute;left:544.2px;top:152.0px" width="70.0" height="3" viewBox="0 0 70.0 3"><polyline points="0.0 2.6 2.2 0.3 4.4 2.6 6.6 0.3 8.8 2.6 11.0 0.3 13.2 2.6 15.4 0.3 17.6 2.6 19.8 0.3 22.0 2.6 24.2 0.3 26.4 2.6 28.6 0.3 30.8 2.6 33.0 0.3 35.2 2.6 37.4 0.3 39.6 2.6 41.8 0.3 44.0 2.6 46.2 0.3 48.4 2.6 50.6 0.3 52.8 2.6 55.0 0.3 57.2 2.6 59.4 0.3 61.6 2.6 63.8 0.3 66.0 2.6 68.2 0.3" fill="none" stroke="#f39060" stroke-width="0.85"/></svg>
<span id="t61" class="tx" style="left:613.2px;top:140px;font-family:'Liberation Mono',monospace;font-size:11.5px;line-height:15px;color:#3f5fbf;font-weight:normal;"> </span>
<span id="t62" class="tx" style="left:620.1px;top:140px;font-family:'Liberation Mono',monospace;font-size:11.5px;line-height:15px;color:#3f5fbf;font-weight:normal;">du</span>
<svg style="position:absolute;left:620.1px;top:152.0px" width="14.8" height="3" viewBox="0 0 14.8 3"><polyline points="0.0 2.6 2.2 0.3 4.4 2.6 6.6 0.3 8.8 2.6 11.0 0.3 13.2 2.6" fill="none" stroke="#f39060" stroke-width="0.85"/></svg>
<span id="t63" class="tx" style="left:633.9000000000001px;top:140px;font-family:'Liberation Mono',monospace;font-size:11.5px;line-height:15px;color:#3f5fbf;font-weight:normal;"> </span>
<span id="t64" class="tx" style="left:640.8000000000001px;top:140px;font-family:'Liberation Mono',monospace;font-size:11.5px;line-height:15px;color:#3f5fbf;font-weight:normal;">fchier</span>
<svg style="position:absolute;left:640.8000000000001px;top:152.0px" width="42.400000000000006" height="3" viewBox="0 0 42.400000000000006 3"><polyline points="0.0 2.6 2.2 0.3 4.4 2.6 6.6 0.3 8.8 2.6 11.0 0.3 13.2 2.6 15.4 0.3 17.6 2.6 19.8 0.3 22.0 2.6 24.2 0.3 26.4 2.6 28.6 0.3 30.8 2.6 33.0 0.3 35.2 2.6 37.4 0.3 39.6 2.6" fill="none" stroke="#f39060" stroke-width="0.85"/></svg>
<span id="t65" class="tx" style="left:682.2px;top:140px;font-family:'Liberation Mono',monospace;font-size:11.5px;line-height:15px;color:#3f5fbf;font-weight:normal;"> java </span>
<span id="t66" class="tx" style="left:723.6px;top:140px;font-family:'Liberation Mono',monospace;font-size:11.5px;line-height:15px;color:#3f5fbf;font-weight:normal;">compilé</span>
<svg style="position:absolute;left:723.6px;top:152.0px" width="49.300000000000004" height="3" viewBox="0 0 49.300000000000004 3"><polyline points="0.0 2.6 2.2 0.3 4.4 2.6 6.6 0.3 8.8 2.6 11.0 0.3 13.2 2.6 15.4 0.3 17.6 2.6 19.8 0.3 22.0 2.6 24.2 0.3 26.4 2.6 28.6 0.3 30.8 2.6 33.0 0.3 35.2 2.6 37.4 0.3 39.6 2.6 41.8 0.3 44.0 2.6 46.2 0.3" fill="none" stroke="#f39060" stroke-width="0.85"/></svg>
<span id="t67" class="tx" style="left:771.9000000000001px;top:140px;font-family:'Liberation Mono',monospace;font-size:11.5px;line-height:15px;color:#3f5fbf;font-weight:normal;"> (</span>
<span id="t68" class="tx" style="left:785.7px;top:140px;font-family:'Liberation Mono',monospace;font-size:11.5px;line-height:15px;color:#3f5fbf;font-weight:normal;">le</span>
<svg style="position:absolute;left:785.7px;top:152.0px" width="14.8" height="3" viewBox="0 0 14.8 3"><polyline points="0.0 2.6 2.2 0.3 4.4 2.6 6.6 0.3 8.8 2.6 11.0 0.3 13.2 2.6" fill="none" stroke="#f39060" stroke-width="0.85"/></svg>
<span id="t69" class="tx" style="left:799.5px;top:140px;font-family:'Liberation Mono',monospace;font-size:11.5px;line-height:15px;color:#3f5fbf;font-weight:normal;"> &quot;.class&quot;)</span>
<span id="t70" class="tx" style="left:292.3px;top:155px;font-family:'Liberation Mono',monospace;font-size:11.5px;line-height:15px;color:#787878;font-weight:normal;">6</span>
<span id="t71" class="tx" style="left:309.6px;top:155px;font-family:'Liberation Mono',monospace;font-size:11.5px;line-height:15px;color:#3f5fbf;font-weight:normal;"> * D:\mer-Eclipse\HelloWorld\bin&gt;java fr.formation.mer.HelloWorld</span>
<span id="t72" class="tx" style="left:292.3px;top:170px;font-family:'Liberation Mono',monospace;font-size:11.5px;line-height:15px;color:#787878;font-weight:normal;">7</span>
<span id="t73" class="tx" style="left:309.6px;top:170px;font-family:'Liberation Mono',monospace;font-size:11.5px;line-height:15px;color:#3f5fbf;font-weight:normal;"> */</span>
<span id="t74" class="tx" style="left:292.3px;top:185px;font-family:'Liberation Mono',monospace;font-size:11.5px;line-height:15px;color:#787878;font-weight:normal;">8</span>
<span id="t75" class="tx" style="left:309.6px;top:185px;font-family:'Liberation Mono',monospace;font-size:11.5px;line-height:15px;color:#7f0055;font-weight:normal;text-shadow:0.25px 0 0 #7f0055;">public</span>
<span id="t76" class="tx" style="left:351.0px;top:185px;font-family:'Liberation Mono',monospace;font-size:11.5px;line-height:15px;color:#000;font-weight:normal;"> </span>
<span id="t77" class="tx" style="left:357.90000000000003px;top:185px;font-family:'Liberation Mono',monospace;font-size:11.5px;line-height:15px;color:#7f0055;font-weight:normal;text-shadow:0.25px 0 0 #7f0055;">class</span>
<span id="t78" class="tx" style="left:392.40000000000003px;top:185px;font-family:'Liberation Mono',monospace;font-size:11.5px;line-height:15px;color:#000;font-weight:normal;"> HelloWorld {</span>
<span id="t79" class="tx" style="left:292.3px;top:200px;font-family:'Liberation Mono',monospace;font-size:11.5px;line-height:15px;color:#787878;font-weight:normal;">9</span>
<span id="t80" class="tx" style="left:285.4px;top:215px;font-family:'Liberation Mono',monospace;font-size:11.5px;line-height:15px;color:#787878;font-weight:normal;">10</span>
<span id="t81" class="tx" style="left:309.6px;top:215px;font-family:'Liberation Mono',monospace;font-size:11.5px;line-height:15px;color:#000;font-weight:normal;">    </span>
<span id="t82" class="tx" style="left:337.20000000000005px;top:215px;font-family:'Liberation Mono',monospace;font-size:11.5px;line-height:15px;color:#7f0055;font-weight:normal;text-shadow:0.25px 0 0 #7f0055;">public</span>
<span id="t83" class="tx" style="left:378.6px;top:215px;font-family:'Liberation Mono',monospace;font-size:11.5px;line-height:15px;color:#000;font-weight:normal;"> </span>
<span id="t84" class="tx" style="left:385.5px;top:215px;font-family:'Liberation Mono',monospace;font-size:11.5px;line-height:15px;color:#7f0055;font-weight:normal;text-shadow:0.25px 0 0 #7f0055;">static</span>
<span id="t85" class="tx" style="left:426.90000000000003px;top:215px;font-family:'Liberation Mono',monospace;font-size:11.5px;line-height:15px;color:#000;font-weight:normal;"> </span>
<span id="t86" class="tx" style="left:433.8px;top:215px;font-family:'Liberation Mono',monospace;font-size:11.5px;line-height:15px;color:#7f0055;font-weight:normal;text-shadow:0.25px 0 0 #7f0055;">void</span>
<span id="t87" class="tx" style="left:461.40000000000003px;top:215px;font-family:'Liberation Mono',monospace;font-size:11.5px;line-height:15px;color:#000;font-weight:normal;"> main(String[] </span>
<span id="t88" class="tx" style="left:564.9000000000001px;top:215px;font-family:'Liberation Mono',monospace;font-size:11.5px;line-height:15px;color:#6a3e3e;font-weight:normal;">args</span>
<span id="t89" class="tx" style="left:592.5px;top:215px;font-family:'Liberation Mono',monospace;font-size:11.5px;line-height:15px;color:#000;font-weight:normal;">) {</span>
<span id="t90" class="tx" style="left:285.4px;top:230px;font-family:'Liberation Mono',monospace;font-size:11.5px;line-height:15px;color:#787878;font-weight:normal;">11</span>
<span id="t91" class="tx" style="left:285.4px;top:245px;font-family:'Liberation Mono',monospace;font-size:11.5px;line-height:15px;color:#787878;font-weight:normal;">12</span>
<span id="t92" class="tx" style="left:309.6px;top:245px;font-family:'Liberation Mono',monospace;font-size:11.5px;line-height:15px;color:#000;font-weight:normal;">        System.</span>
<span id="t93" class="tx" style="left:413.1px;top:245px;font-family:'Liberation Mono',monospace;font-size:11.5px;line-height:15px;color:#0000c0;font-weight:normal;text-shadow:0.25px 0 0 #0000c0;font-style:italic;">out</span>
<span id="t94" class="tx" style="left:433.8px;top:245px;font-family:'Liberation Mono',monospace;font-size:11.5px;line-height:15px;color:#000;font-weight:normal;">.println(</span>
<span id="t95" class="tx" style="left:495.90000000000003px;top:245px;font-family:'Liberation Mono',monospace;font-size:11.5px;line-height:15px;color:#2a00ff;font-weight:normal;">&quot;Bonjour les Cobolistes !&quot;</span>
<span id="t96" class="tx" style="left:675.3000000000001px;top:245px;font-family:'Liberation Mono',monospace;font-size:11.5px;line-height:15px;color:#000;font-weight:normal;">);</span>
<span id="t97" class="tx" style="left:285.4px;top:260px;font-family:'Liberation Mono',monospace;font-size:11.5px;line-height:15px;color:#787878;font-weight:normal;">13</span>
<span id="t98" class="tx" style="left:309.6px;top:260px;font-family:'Liberation Mono',monospace;font-size:11.5px;line-height:15px;color:#000;font-weight:normal;">    }</span>
<span id="t99" class="tx" style="left:285.4px;top:275px;font-family:'Liberation Mono',monospace;font-size:11.5px;line-height:15px;color:#787878;font-weight:normal;">14</span>
<span id="t100" class="tx" style="left:309.6px;top:275px;font-family:'Liberation Mono',monospace;font-size:11.5px;line-height:15px;color:#000;font-weight:normal;">}</span>
<span id="t101" class="tx" style="left:285.4px;top:290px;font-family:'Liberation Mono',monospace;font-size:11.5px;line-height:15px;color:#787878;font-weight:normal;">15</span>
<svg style="position:absolute;left:299px;top:112.5px" width="8" height="8" viewBox="0 0 8 8"><circle cx="4" cy="4" r="3.4" fill="#f4f4f4" stroke="#9aa4b0" stroke-width=".9"/><path d="M2 4 H6" stroke="#4a5a6a" stroke-width="1"/></svg>
<svg style="position:absolute;left:299px;top:217.5px" width="8" height="8" viewBox="0 0 8 8"><circle cx="4" cy="4" r="3.4" fill="#f4f4f4" stroke="#9aa4b0" stroke-width=".9"/><path d="M2 4 H6" stroke="#4a5a6a" stroke-width="1"/></svg>
<div style="position:absolute;left:778.3000000000001px;top:139px;width:8px;height:15px;box-sizing:border-box;border:1px solid #8a2a6a"></div>
<div style="position:absolute;left:1454px;top:79px;width:16px;height:615px;background:#f0f0f0;"></div>
<div style="position:absolute;left:1470px;top:79px;width:12px;height:615px;background:#f8f8f8;"></div>
<div style="position:absolute;left:308px;top:678px;width:1146px;height:16px;background:#f0f0f0;"></div>
<svg style="position:absolute;left:1458px;top:84.5px" width="8.0" height="6.0" viewBox="0 0 8.0 6.0"><path d="M0 6.0 L4.0 0 L8.0 6.0Z" fill="#a0a0a0"/></svg>
<svg style="position:absolute;left:1458px;top:666px" width="8.0" height="6.0" viewBox="0 0 8.0 6.0"><path d="M0 0 L4.0 6.0 L8.0 0Z" fill="#a0a0a0"/></svg>
<svg style="position:absolute;left:313px;top:681.5px" width="6.0" height="8.0" viewBox="0 0 6.0 8.0"><path d="M6.0 0 L0 4.0 L6.0 8.0Z" fill="#a0a0a0"/></svg>
<svg style="position:absolute;left:1442px;top:681.5px" width="6.0" height="8.0" viewBox="0 0 6.0 8.0"><path d="M0 0 L6.0 4.0 L0 8.0Z" fill="#a0a0a0"/></svg>
<div style="position:absolute;left:1488px;top:78px;width:401px;height:1px;background:#e6e6e6;"></div>
<div style="position:absolute;left:1576px;top:56px;width:1px;height:22px;background:#e4e4e4;"></div>
<svg style="position:absolute;left:1493px;top:60px" width="14" height="15" viewBox="0 0 14 15"><defs><linearGradient id="gob" x1="0" y1="0" x2="1" y2="1"><stop offset="0" stop-color="#f0f8ff"/><stop offset="1" stop-color="#80b8ee"/></linearGradient></defs><rect x="0.5" y="0.5" width="5" height="5" fill="url(#gob)" stroke="#3a78c8"/><rect x="0.5" y="9.5" width="5" height="5" fill="url(#gob)" stroke="#3a78c8"/><path d="M7 2.5 H13 M9.5 7.5 H13 M7 12.5 H13" stroke="#2a6ab0" stroke-width="1"/><rect x="6.5" y="6.5" width="2" height="2" fill="none" stroke="#2a6ab0" stroke-width="1"/></svg>
<span id="t102" class="tx" style="transform:scaleX(1.0202);left:1511.8px;top:59px;font-family:'Liberation Sans',sans-serif;font-size:12px;line-height:16px;color:#000;font-weight:normal;">Outline</span>
<svg style="position:absolute;left:1559px;top:62.8px" width="10" height="10" viewBox="0 0 10 10"><path d="M0.6 0.6 L9.2 9.2 M9.2 0.6 L0.6 9.2" stroke="#444" stroke-width="0.95" fill="none"/></svg>
<div style="position:absolute;left:1488px;top:77px;width:88px;height:2px;background:#1a5fc4;"></div>
<svg style="position:absolute;left:1583px;top:60px" width="11" height="15" viewBox="0 0 11 15"><path d="M0.5 0.5 H10.5 V13.5 Q8 12.5 5.5 14.5 Q3 12.5 0.5 13.5Z" fill="#dfe3f3" stroke="#6a6a8a" stroke-width="1"/><path d="M2 2.5 H9 M2 4.5 H9 M2 6.5 H9 M2 8.5 H9 M2 10.5 H9" stroke="#40404a" stroke-width="1"/></svg>
<span id="t103" class="tx" style="transform:scaleX(0.9467);left:1599px;top:59px;font-family:'Liberation Sans',sans-serif;font-size:12px;line-height:16px;color:#000;font-weight:normal;">Task List</span>
<svg style="position:absolute;left:1666px;top:60px" width="13" height="13" viewBox="0 0 13 13"><circle cx="4" cy="4" r="3.5" fill="#c8c8c8"/><circle cx="9.5" cy="5" r="3.5" fill="#c8c8c8"/><circle cx="5.5" cy="9.5" r="3.5" fill="#a8a8a8"/></svg>
<svg style="position:absolute;left:1688px;top:60px" width="13" height="13" viewBox="0 0 13 13"><rect x="0.5" y="0.5" width="9" height="9" fill="#dfe7ee" stroke="#8a9bb0"/><rect x="3.5" y="3.5" width="9" height="9" fill="#e8f3f6" stroke="#8a9bb0"/><rect x="5" y="7.3" width="6" height="1.6" fill="#1f5a99"/></svg>
<svg style="position:absolute;left:1708px;top:58px" width="17" height="16" viewBox="0 0 17 16"><path d="M3 1.5 V14.5" stroke="#3a6a90" stroke-width="1.1"/><path d="M0.8 11.8 L3 15 L5.2 11.8Z" fill="#3a6a90"/><path d="M6.6 3.2 Q7.2 1.6 9.3 1.6 Q11.4 1.6 11.4 3.8 V7.6 H9.8 V7 Q9 7.8 8 7.8 Q6 7.8 6 6 Q6 4.2 9.7 4.2 V3.8 Q9.7 3 8.8 3 Q8 3 7.8 3.6Z M9.7 5.3 Q7.6 5.3 7.6 6 Q7.6 6.6 8.4 6.6 Q9.7 6.6 9.7 5.4Z" fill="#1f8f7f"/><path d="M9.5 9 H15.8 V10.4 L12 14.3 H15.9 V15.8 H9.3 V14.4 L13.1 10.5 H9.5Z" fill="#a84aa8"/></svg>
<svg style="position:absolute;left:1732px;top:58px" width="16" height="16" viewBox="0 0 16 16"><circle cx="8" cy="8.5" r="5.5" fill="#4aa0e0"/><circle cx="7" cy="7" r="2" fill="#bfe0fa"/><path d="M1 1 L15 15" stroke="#283c8c" stroke-width="1.5"/></svg>
<svg style="position:absolute;left:1756px;top:58px" width="14" height="16" viewBox="0 0 14 16"><circle cx="6" cy="9.5" r="3.8" fill="#9a9a9a"/><path d="M1 4 L11 14" stroke="#283c8c" stroke-width="1.5"/><text x="8.5" y="6.5" font-family="Liberation Sans" font-size="7.5" fill="#3a7ab8">S</text></svg>
<svg style="position:absolute;left:1781px;top:62px" width="8" height="8" viewBox="0 0 8 8"><defs><radialGradient id="gb" cx="0.5" cy="0.4" r="0.6"><stop offset="0" stop-color="#a6d08a"/><stop offset="1" stop-color="#1f8a4a"/></radialGradient></defs><circle cx="4" cy="4" r="3.9" fill="url(#gb)"/></svg>
<svg style="position:absolute;left:1801px;top:58px" width="14" height="16" viewBox="0 0 14 16"><circle cx="6" cy="9.5" r="3.8" fill="#9a9a9a"/><path d="M1 4 L11 14" stroke="#283c8c" stroke-width="1.5"/><path d="M10 1 V6 H13.5" stroke="#3a7ab8" stroke-width="1.6" fill="none"/></svg>
<svg style="position:absolute;left:1827px;top:57.5px" width="6" height="16" viewBox="0 0 6 16"><g fill="none" stroke="#555" stroke-width="1"><circle cx="3" cy="3" r="1.8"/><circle cx="3" cy="8" r="1.8"/><circle cx="3" cy="13" r="1.8"/></g></svg>
<svg style="position:absolute;left:1847.4px;top:61px" width="11" height="5" viewBox="0 0 11 5"><rect x="0.6" y="0.6" width="9.2" height="3.2" fill="#fff" stroke="#000" stroke-width="1.15"/></svg>
<svg style="position:absolute;left:1870px;top:61px" width="11" height="11" viewBox="0 0 11 11"><rect x="0.6" y="0.6" width="9.2" height="9.2" fill="#f8f8f8" stroke="#000" stroke-width="1.15"/><rect x="0.6" y="1.8" width="9.2" height="1" fill="#000"/></svg>
<svg style="position:absolute;left:1515px;top:82.5px" width="13" height="12" viewBox="0 0 13 12"><rect x="1" y="1" width="11" height="11" fill="#e9e4b8" stroke="#8e8a6a" stroke-width="1"/><path d="M6.5 0 V13 M0 6.5 H13" stroke="#6e6a4a" stroke-width="1.2"/></svg>
<span id="t104" class="tx" style="transform:scaleX(1.0413);left:1539.4px;top:80px;font-family:'Liberation Sans',sans-serif;font-size:12px;line-height:16px;color:#000;font-weight:normal;">fr.formation.mer</span>
<svg style="position:absolute;left:1497px;top:104px" width="9" height="6" viewBox="0 0 9 6"><path d="M0.8 0.8 L4.5 4.6 L8.2 0.8" fill="none" stroke="#333" stroke-width="1.5"/></svg>
<div style="position:absolute;left:1511px;top:97.3px;width:89.6px;height:17.4px;box-sizing:border-box;background:#cce8ff;border:1px solid #2a82da;border-radius:2px"></div>
<svg style="position:absolute;left:1514px;top:98.5px" width="21" height="15" viewBox="0 0 21 15"><circle cx="6.5" cy="6.5" r="6" fill="#3c9b3c" stroke="#2a702a" stroke-width=".8"/><path d="M9.2 4.6 A3.1 3.1 0 1 0 9.2 8.4" stroke="#fff" stroke-width="1.8" fill="none"/><path d="M15 10 L20.5 12 L15 14.2Z" fill="#3cae3c"/></svg>
<span id="t105" class="tx" style="transform:scaleX(1.0074);left:1539.9px;top:98px;font-family:'Liberation Sans',sans-serif;font-size:12px;line-height:16px;color:#000;font-weight:normal;">HelloWorld</span>
<svg style="position:absolute;left:1532.7px;top:121px" width="8" height="8" viewBox="0 0 8 8"><defs><radialGradient id="gb" cx="0.5" cy="0.4" r="0.6"><stop offset="0" stop-color="#a6d08a"/><stop offset="1" stop-color="#1f8a4a"/></radialGradient></defs><circle cx="4" cy="4" r="3.9" fill="url(#gb)"/></svg>
<span id="t106" class="tx" style="transform:scaleX(0.7882);left:1544.8px;top:112.8px;font-family:'Liberation Sans',sans-serif;font-size:9.5px;line-height:13px;color:#d8305a;font-weight:bold;">S</span>
<span id="t107" class="tx" style="transform:scaleX(1.0079);left:1555.5px;top:116px;font-family:'Liberation Sans',sans-serif;font-size:12px;line-height:16px;color:#000;font-weight:normal;">main(String[])</span>
<span id="t108" class="tx" style="transform:scaleX(1.0109);left:1630.5px;top:116px;font-family:'Liberation Sans',sans-serif;font-size:12px;line-height:16px;color:#957d47;font-weight:normal;">: void</span>
<div style="position:absolute;left:5px;top:698px;width:263px;height:290px;background:#f8f8f8;"></div>
<div style="position:absolute;left:267px;top:698px;width:1px;height:290px;background:#e4e4e4;"></div>
<div style="position:absolute;left:5px;top:721px;width:262px;height:1px;background:#e6e6e6;"></div>
<div style="position:absolute;left:135px;top:698px;width:1px;height:23px;background:#e4e4e4;"></div>
<svg style="position:absolute;left:7px;top:703px" width="14" height="14" viewBox="0 0 14 14"><path d="M0.2 7 L3.4 0.8 H10.6 L13.8 7 L10.6 13.2 H3.4Z" fill="#008a00"/><path d="M4.6 5 A3.4 3.4 0 1 0 9.4 5" stroke="#b8e6b8" stroke-width="1.3" fill="none"/><path d="M7 3 V7" stroke="#b8e6b8" stroke-width="1.4"/></svg>
<span id="t109" class="tx" style="transform:scaleX(0.9685);left:25.5px;top:702px;font-family:'Liberation Sans',sans-serif;font-size:12px;line-height:16px;color:#000;font-weight:normal;">Boot Dashboard</span>
<svg style="position:absolute;left:118px;top:705.7px" width="10" height="10" viewBox="0 0 10 10"><path d="M0.6 0.6 L9.2 9.2 M9.2 0.6 L0.6 9.2" stroke="#444" stroke-width="0.95" fill="none"/></svg>
<div style="position:absolute;left:5px;top:720px;width:130px;height:2px;background:#8a8a8a;"></div>
<svg style="position:absolute;left:224.3px;top:704px" width="11" height="5" viewBox="0 0 11 5"><rect x="0.6" y="0.6" width="9.2" height="3.2" fill="#fff" stroke="#000" stroke-width="1.15"/></svg>
<svg style="position:absolute;left:247px;top:704px" width="11" height="11" viewBox="0 0 11 11"><rect x="0.6" y="0.6" width="9.2" height="9.2" fill="#f8f8f8" stroke="#000" stroke-width="1.15"/><rect x="0.6" y="1.8" width="9.2" height="1" fill="#000"/></svg>
<svg style="position:absolute;left:7px;top:725px" width="15" height="16" viewBox="0 0 15 16"><rect x="0.5" y="0.5" width="8" height="8" fill="#b8b8b8" stroke="#a0a0a0"/><path d="M7 7 L15 11 L7 15Z" fill="#c8c8c8"/></svg>
<svg style="position:absolute;left:28.8px;top:725px" width="15" height="16" viewBox="0 0 15 16"><rect x="0.5" y="0.5" width="8" height="8" fill="#8a8a8a" stroke="#a0a0a0"/><circle cx="10" cy="11" r="3" fill="#c0c0c0" stroke="#9a9a9a"/><path d="M6 9 L14 14 M14 8 L6 14" stroke="#9a9a9a" stroke-width=".8"/></svg>
<svg style="position:absolute;left:53.2px;top:727px" width="11" height="11" viewBox="0 0 11 11"><rect x="0.5" y="0.5" width="10" height="10" rx="1" fill="#b4b4b4" stroke="#c8c8c8"/></svg>
<svg style="position:absolute;left:75px;top:726px" width="13" height="13" viewBox="0 0 13 13"><circle cx="6.5" cy="6.5" r="6.3" fill="#c4c4c4"/><circle cx="5" cy="4.5" r="2.5" fill="#f0f0f0" opacity=".8"/></svg>
<svg style="position:absolute;left:97.5px;top:726px" width="13" height="13" viewBox="0 0 13 13"><rect x="0.8" y="0.8" width="11.4" height="8.5" rx="1" fill="#f4f4f4" stroke="#a8a8a8" stroke-width="1.3"/><path d="M3 3.5 H6 M3 5.5 H9" stroke="#a8a8a8"/><path d="M3 11.5 H10" stroke="#a8a8a8" stroke-width="1.5"/></svg>
<svg style="position:absolute;left:118px;top:725px" width="16" height="16" viewBox="0 0 16 16"><path d="M1 4.5 L5 1 V3 H10 V6 H5 V8Z" fill="#f6f6f6" stroke="#b8b8b8" stroke-width="1"/><path d="M15 11.5 L11 15 V13 H6 V10 H11 V8Z" fill="#f6f6f6" stroke="#b8b8b8" stroke-width="1"/></svg>
<svg style="position:absolute;left:142px;top:725px" width="15" height="15" viewBox="0 0 15 15"><path d="M1 14 L2 10 L11 1 L14 4 L5 13Z" fill="#d0d0d0" stroke="#a0a0a0" stroke-width=".8"/></svg>
<svg style="position:absolute;left:164px;top:726px" width="14" height="13" viewBox="0 0 14 13"><rect x="0.5" y="0.5" width="13" height="12" fill="#eaf0f8" stroke="#6a80a8"/><path d="M0.5 3.5 H13.5 M0.5 6.5 H13.5 M0.5 9.5 H13.5 M4 3.5 V12.5" stroke="#9ab0d0" stroke-width=".8"/></svg>
<svg style="position:absolute;left:188.8px;top:725px" width="11" height="16" viewBox="0 0 11 16"><circle cx="5.5" cy="5.5" r="5" fill="#f8d838" stroke="#c8a020" stroke-width=".7"/><rect x="3" y="10.5" width="5" height="4.5" rx="1" fill="#8a7a8a"/></svg>
<svg style="position:absolute;left:209px;top:730.5px" width="8" height="5" viewBox="0 0 8 5"><path d="M0 0 L8 0 L4 4.5Z" fill="#222"/></svg>
<svg style="position:absolute;left:223.4px;top:726px" width="14" height="15" viewBox="0 0 14 15"><path d="M0.5 0.5 H13.5 L8.5 6.5 V14.5 H5.5 V6.5Z" fill="#d8eefa" stroke="#8aaacc" stroke-width=".9"/></svg>
<svg style="position:absolute;left:246.7px;top:726px" width="13" height="13" viewBox="0 0 13 13"><path d="M4.5 0.5 H8.5 V4.5 H12.5 V8.5 H8.5 V12.5 H4.5 V8.5 H0.5 V4.5 H4.5Z" fill="#a8d040" stroke="#6aa030" stroke-width=".8"/></svg>
<svg style="position:absolute;left:10px;top:746.6px" width="6" height="16" viewBox="0 0 6 16"><g fill="none" stroke="#555" stroke-width="1"><circle cx="3" cy="3" r="1.8"/><circle cx="3" cy="8" r="1.8"/><circle cx="3" cy="13" r="1.8"/></g></svg>
<div style="position:absolute;left:8px;top:772px;width:253px;height:20px;box-sizing:border-box;background:#fff;border:1px solid #e6e6e6;border-bottom:1px solid #a2a2a2;border-radius:1px"></div>
<span id="t110" class="tx" style="transform:scaleX(0.9655);left:13.5px;top:774px;font-family:'Liberation Sans',sans-serif;font-size:12px;line-height:16px;color:#6d6d6d;font-weight:normal;">Type tags, projects, or working set names to ma</span>
<svg style="position:absolute;left:27px;top:799px" width="13" height="13" viewBox="0 0 13 13"><path d="M0.2 7 L3.4 0.8 H10.6 L13.8 7 L10.6 13.2 H3.4Z" fill="#008a00"/><path d="M4.6 5 A3.4 3.4 0 1 0 9.4 5" stroke="#b8e6b8" stroke-width="1.3" fill="none"/><path d="M7 3 V7" stroke="#b8e6b8" stroke-width="1.4"/></svg>
<span id="t111" class="tx" style="transform:scaleX(0.9284);left:46.4px;top:798px;font-family:'Liberation Sans',sans-serif;font-size:12px;line-height:16px;color:#000;font-weight:bold;">local</span>
<div style="position:absolute;left:272px;top:699px;width:1614px;height:1px;background:#ebebeb;"></div>
<div style="position:absolute;left:272px;top:724px;width:1614px;height:1px;background:#e6e6e6;"></div>
<div style="position:absolute;left:272.7px;top:723px;width:91.5px;height:2px;background:#8a8a8a;"></div>
<div style="position:absolute;left:364px;top:700px;width:1px;height:23px;background:#e4e4e4;"></div>
<svg style="position:absolute;left:278px;top:705.8px" width="14" height="13" viewBox="0 0 14 13"><rect x="0.8" y="0.8" width="12.4" height="9" rx="1" fill="#eef4fb" stroke="#3f6fb6" stroke-width="1.6"/><path d="M3.5 3.5 H7 M3.5 5.5 H10" stroke="#3f6fb6" stroke-width="1"/><path d="M5 10 H9 V11.5 H11 V13 H3 V11.5 H5Z" fill="#3f6fb6"/></svg>
<span id="t112" class="tx" style="transform:scaleX(0.9720);left:296px;top:705px;font-family:'Liberation Sans',sans-serif;font-size:12px;line-height:16px;color:#000;font-weight:normal;">Console</span>
<svg style="position:absolute;left:347.1px;top:708px" width="10" height="10" viewBox="0 0 10 10"><path d="M0.6 0.6 L9.2 9.2 M9.2 0.6 L0.6 9.2" stroke="#444" stroke-width="0.95" fill="none"/></svg>
<svg style="position:absolute;left:368px;top:704.5px" width="15" height="16" viewBox="0 0 15 16"><rect x="0.5" y="0.5" width="7.5" height="14" fill="#f4f6fb" stroke="#8a8aa0" stroke-width=".9"/><path d="M8 0.5 H12.5 Q11 4 12.5 7 Q14 10 12.5 14.5 H8Z" fill="#d8e6f6" stroke="#8a8aa0" stroke-width=".9"/><circle cx="4.3" cy="4.3" r="2.8" fill="#e22a2a"/><path d="M1.5 13.5 L4.3 9 L7 13.5Z" fill="#f5b020"/><path d="M0.5 7.5 H8" stroke="#8a8aa0" stroke-width=".7"/></svg>
<span id="t113" class="tx" style="transform:scaleX(0.9568);left:388px;top:705px;font-family:'Liberation Sans',sans-serif;font-size:12px;line-height:16px;color:#000;font-weight:normal;">Problems</span>
<span id="t114" class="tx" style="transform:scaleX(0.8862);left:449.5px;top:704.5px;font-family:'Liberation Sans',sans-serif;font-size:12px;line-height:16px;color:#3b6fb8;font-weight:normal;font-style:italic;">@</span>
<span id="t115" class="tx" style="transform:scaleX(0.9127);left:466.4px;top:705px;font-family:'Liberation Sans',sans-serif;font-size:12px;line-height:16px;color:#000;font-weight:normal;">Javadoc</span>
<svg style="position:absolute;left:517.5px;top:705px" width="15" height="16" viewBox="0 0 15 16"><path d="M0.5 0.5 H7.5 L11 4 V13.5 H0.5Z" fill="#eef2fa" stroke="#b0904a" stroke-width="1"/><path d="M7.5 0.5 V4 H11" fill="none" stroke="#b0904a" stroke-width=".8"/><path d="M4 4 Q2.5 4 2.8 6 Q3 7.3 2 7.5 Q3 7.7 2.8 9 Q2.5 11 4 11" stroke="#5a6a9a" stroke-width=".9" fill="none"/><path d="M5 6.5 H8 M5 8.5 H8" stroke="#5a6a9a" stroke-width=".9"/><path d="M7.5 10.5 H11 V8.5 L14.5 11.8 L11 15 V13 H7.5Z" fill="#fbd77a" stroke="#d08a20" stroke-width=".8"/></svg>
<span id="t116" class="tx" style="transform:scaleX(0.9637);left:536.7px;top:705px;font-family:'Liberation Sans',sans-serif;font-size:12px;line-height:16px;color:#000;font-weight:normal;">Declaration</span>
<svg style="position:absolute;left:1529px;top:705px" width="14" height="14" viewBox="0 0 14 14"><path d="M3 9 Q1 4 6 3 L6 1 L9 4 L6 7 V5 Q3 6 4.5 9" fill="#eee" stroke="#cfcfcf"/><path d="M11 5 Q13 10 8 11 L8 13 L5 10 L8 7 V9 Q11 8 9.5 5" fill="#eee" stroke="#cfcfcf"/></svg>
<svg style="position:absolute;left:1553.2px;top:707px" width="11" height="11" viewBox="0 0 11 11"><rect x="0.5" y="0.5" width="10" height="10" rx="1" fill="#a8a8a8" stroke="#c8c8c8"/></svg>
<svg style="position:absolute;left:1575px;top:706px" width="13" height="13" viewBox="0 0 13 13"><path d="M1.5 1.5 L11.5 11.5 M11.5 1.5 L1.5 11.5" stroke="#666" stroke-width="3.2" stroke-linecap="round"/></svg>
<svg style="position:absolute;left:1596.5px;top:704px" width="16" height="16" viewBox="0 0 16 16"><path d="M1.5 1.5 L9 9 M9 1.5 L1.5 9" stroke="#aaa" stroke-width="2.8" stroke-linecap="round"/><path d="M5.5 6 L14 14.5 M14 6 L5.5 14.5" stroke="#6a6a6a" stroke-width="3" stroke-linecap="round"/></svg>
<div style="position:absolute;left:1617px;top:703px;width:1px;height:18px;background:#8a8a8a;"></div>
<svg style="position:absolute;left:1627px;top:704px" width="16" height="16" viewBox="0 0 16 16"><path d="M0.5 0.5 H7.5 L10.5 3.5 V13.5 H0.5Z" fill="#eef3fb" stroke="#b8a060" stroke-width="1"/><path d="M7.5 0.5 V3.5 H10.5" fill="#f6e8b8" stroke="#b8a060" stroke-width=".8"/><path d="M2 3.5 H6 M2 5.5 H8.5 M2 7.5 H8.5 M2 9.5 H8 M2 11.5 H7" stroke="#5a7ac0" stroke-width="1"/><path d="M9.2 9.2 L14.3 14.3 M14.3 9.2 L9.2 14.3" stroke="#505050" stroke-width="2.2" stroke-linecap="round"/></svg>
<svg style="position:absolute;left:1649.7px;top:704px" width="16" height="16" viewBox="0 0 16 16"><rect x="1.5" y="0.5" width="13" height="14" fill="#e6f2fb" stroke="#9a8a5a" stroke-width="1"/><rect x="10" y="1" width="4" height="13" fill="#dfe9f3" stroke="#7a9ac0" stroke-width=".8"/><rect x="11" y="2" width="2" height="2" fill="#fff" stroke="#8aa8c8" stroke-width=".6"/><rect x="11" y="6.5" width="2" height="2.5" fill="#fff" stroke="#8aa8c8" stroke-width=".6"/><rect x="11" y="11" width="2" height="2" fill="#fff" stroke="#8aa8c8" stroke-width=".6"/><rect x="0.5" y="9.5" width="7" height="6" rx="1" fill="#e8b030" stroke="#a87a20"/><path d="M2 9.5 V7.2 A2 2 0 0 1 6 7.2 V9.5" stroke="#a87a20" fill="none" stroke-width="1.2"/></svg>
<svg style="position:absolute;left:1672px;top:704px" width="16" height="16" viewBox="0 0 16 16"><path d="M0.5 0.5 H8 L11 3.5 V14.5 H0.5Z" fill="#f4efe0" stroke="#b49a5a" stroke-width=".9"/><path d="M2.5 4 H8 M2.5 6.5 H8 M2.5 9 H6" stroke="#6a8ab8" stroke-width=".8"/><path d="M14 5 V11 H8 M10.5 8.5 L8 11 L10.5 13.5" stroke="#e0a030" stroke-width="1.6" fill="none"/></svg>
<div style="position:absolute;left:1690.9px;top:700.6px;width:22.7px;height:21.1px;box-sizing:border-box;background:#cce4f7;border:1px solid #99ccf2;border-radius:2px"></div>
<div style="position:absolute;left:1713.6px;top:700.6px;width:22.4px;height:21.1px;box-sizing:border-box;background:#cce4f7;border:1px solid #99ccf2;border-radius:2px"></div>
<svg style="position:absolute;left:1694px;top:703px" width="17" height="16" viewBox="0 0 17 16"><rect x="4.5" y="1" width="11" height="8" fill="#eef4fb" stroke="#3f6fb6" stroke-width="1.3"/><path d="M6.5 3.5 H12 M6.5 5.5 H13" stroke="#3f6fb6" stroke-width=".8"/><rect x="0.8" y="7" width="6" height="5" fill="#eef4fb" stroke="#3f6fb6" stroke-width="1.3"/><path d="M2 14 H6" stroke="#3f6fb6" stroke-width="1.5"/></svg>
<svg style="position:absolute;left:1717px;top:703px" width="17" height="16" viewBox="0 0 17 16"><rect x="4.5" y="1" width="11" height="8" fill="#eef4fb" stroke="#3f6fb6" stroke-width="1.3"/><path d="M8 3 L11 6.5 M11 3 L8 6.5" stroke="#e03030" stroke-width="1.2"/><rect x="0.8" y="7" width="6" height="5" fill="#eef4fb" stroke="#3f6fb6" stroke-width="1.3"/><path d="M2 14 H6" stroke="#3f6fb6" stroke-width="1.5"/></svg>
<div style="position:absolute;left:1739px;top:703px;width:1px;height:18px;background:#8a8a8a;"></div>
<svg style="position:absolute;left:1748.4px;top:704px" width="16" height="16" viewBox="0 0 16 16"><rect x="0.5" y="3.5" width="13" height="11" fill="#eaf4fc" stroke="#8a7a50"/><rect x="0.5" y="3.5" width="13" height="2.5" fill="#3c8ad8"/><path d="M8 9 L12.5 4.5" stroke="#2a7a2a" stroke-width="1.3"/><circle cx="12.5" cy="3.5" r="2.8" fill="#3aa03a"/></svg>
<svg style="position:absolute;left:1772.4px;top:704px" width="14" height="14" viewBox="0 0 14 14"><rect x="0.8" y="0.8" width="12.4" height="9" rx="1" fill="#f4f4f4" stroke="#a8a8a8" stroke-width="1.3"/><path d="M3.5 3.5 H7 M3.5 5.5 H10" stroke="#b0b0b0"/><path d="M3 12.5 H11" stroke="#a8a8a8" stroke-width="1.5"/></svg>
<svg style="position:absolute;left:1793px;top:709.5px" width="8" height="5" viewBox="0 0 8 5"><path d="M0 0 L8 0 L4 4.5Z" fill="#8a8a8a"/></svg>
<svg style="position:absolute;left:1809px;top:704px" width="16" height="16" viewBox="0 0 16 16"><rect x="0.5" y="3.5" width="13" height="11" fill="#eaf4fc" stroke="#8a7a50"/><rect x="0.5" y="3.5" width="13" height="2.5" fill="#3c8ad8"/><path d="M12 0 L13.2 2.6 L15.8 3.8 L13.2 5 L12 7.6 L10.8 5 L8.2 3.8 L10.8 2.6Z" fill="#fbe6a0" stroke="#c9a048" stroke-width=".6"/></svg>
<svg style="position:absolute;left:1830px;top:709.5px" width="8" height="5" viewBox="0 0 8 5"><path d="M0 0 L8 0 L4 4.5Z" fill="#111"/></svg>
<svg style="position:absolute;left:1847.6px;top:707px" width="11" height="5" viewBox="0 0 11 5"><rect x="0.6" y="0.6" width="9.2" height="3.2" fill="#fff" stroke="#000" stroke-width="1.15"/></svg>
<svg style="position:absolute;left:1870px;top:707px" width="11" height="11" viewBox="0 0 11 11"><rect x="0.6" y="0.6" width="9.2" height="9.2" fill="#f8f8f8" stroke="#000" stroke-width="1.15"/><rect x="0.6" y="1.8" width="9.2" height="1" fill="#000"/></svg>
<div style="position:absolute;left:272px;top:740px;width:1614px;height:1px;background:#b6b6b6;"></div>
<span id="t117" class="tx" style="transform:scaleX(0.9579);left:273.6px;top:724.2px;font-family:'Liberation Sans',sans-serif;font-size:12px;line-height:16px;color:#000;font-weight:normal;">&lt;terminated&gt; HelloWorld [Java Application] C:\Program Files\Java\jdk-17\bin\javaw.exe  (16 févr. 2026, 11:59:28 – 11:59:30 elapsed: 0:00:02.104) [pid: 29004]</span>
<div style="position:absolute;left:272px;top:741px;width:1602px;height:231px;background:#fff;"></div>
<span id="t118" class="tx" style="left:275px;top:742px;font-family:'Liberation Mono',monospace;font-size:11.6px;line-height:15px;color:#000;font-weight:normal;">Bonjour les Cobolistes !</span>
<div style="position:absolute;left:1874px;top:741px;width:12px;height:240px;background:#f0f0f0;"></div>
<div style="position:absolute;left:272px;top:972px;width:1602px;height:9px;background:#f0f0f0;"></div>
<svg style="position:absolute;left:1876px;top:747px" width="7.2" height="5.4" viewBox="0 0 7.2 5.4"><path d="M0 5.4 L3.6 0 L7.2 5.4Z" fill="#a0a0a0"/></svg>
<svg style="position:absolute;left:1876px;top:960px" width="7.2" height="5.4" viewBox="0 0 7.2 5.4"><path d="M0 0 L3.6 5.4 L7.2 0Z" fill="#a0a0a0"/></svg>
<svg style="position:absolute;left:278px;top:973px" width="4.800000000000001" height="6.4" viewBox="0 0 4.800000000000001 6.4"><path d="M4.800000000000001 0 L0 3.2 L4.800000000000001 6.4Z" fill="#a0a0a0"/></svg>
<svg style="position:absolute;left:1862px;top:973px" width="4.800000000000001" height="6.4" viewBox="0 0 4.800000000000001 6.4"><path d="M0 0 L4.800000000000001 3.2 L0 6.4Z" fill="#a0a0a0"/></svg>
<div style="position:absolute;left:5px;top:988px;width:1885px;height:1px;background:#e6e6e6;"></div>
<span id="t119" class="tx" style="transform:scaleX(1.0187);left:4.5px;top:992px;font-family:'Liberation Sans',sans-serif;font-size:12px;line-height:16px;color:#000;font-weight:normal;">fr.formation.mer.HelloWorld - HelloWorld/src</span>
<svg style="position:absolute;left:1582.5px;top:995.5px" width="2" height="16" viewBox="0 0 2 16"><rect x="0" y="0" width="2" height="2" fill="#c4b79c"/><rect x="0" y="4" width="2" height="2" fill="#c4b79c"/><rect x="0" y="8" width="2" height="2" fill="#c4b79c"/><rect x="0" y="12" width="2" height="2" fill="#c4b79c"/></svg>
<svg style="position:absolute;left:1864px;top:995.5px" width="2" height="16" viewBox="0 0 2 16"><rect x="0" y="0" width="2" height="2" fill="#c4b79c"/><rect x="0" y="4" width="2" height="2" fill="#c4b79c"/><rect x="0" y="8" width="2" height="2" fill="#c4b79c"/><rect x="0" y="12" width="2" height="2" fill="#c4b79c"/></svg>
<svg style="position:absolute;left:1873px;top:992px" width="12" height="16" viewBox="0 0 12 16"><circle cx="6" cy="5.5" r="5" fill="#fbe38a" stroke="#e0c060" stroke-width=".6"/><rect x="3.5" y="10" width="5" height="2" fill="#fff"/><rect x="3.5" y="12" width="5" height="1.5" fill="#8a9ab8"/><rect x="4" y="13.5" width="4" height="1.5" fill="#6a7aa0"/></svg>
<svg style="position:absolute;left:0;top:0" width="1896" height="1016">
<g fill="none" stroke="#ff0000" stroke-width="3.6">
<rect x="4" y="51.8" width="259.9" height="644" rx="1"/>
<rect x="270.6" y="51.8" width="1213.4" height="644" rx="1"/>
<rect x="1486.2" y="51.8" width="403.8" height="644" rx="1"/>
<rect x="270.6" y="696" width="1616.8" height="287.3" rx="1"/>
</g></svg>
<div style="position:absolute;left:76px;top:292px;width:132px;height:39px;background:#ffff00;"></div>
<span id="t120" class="tx" style="left:76px;top:292px;font-family:'Liberation Sans',sans-serif;font-size:34px;line-height:38px;color:#000;font-weight:normal;">Package</span>
<div style="position:absolute;left:76px;top:331px;width:127px;height:38px;background:#ffff00;"></div>
<span id="t121" class="tx" style="left:76px;top:330px;font-family:'Liberation Sans',sans-serif;font-size:34px;line-height:38px;color:#000;font-weight:normal;">Explorer</span>
<div style="position:absolute;left:768px;top:292px;width:239px;height:38px;background:#ffff00;"></div>
<span id="t122" class="tx" style="left:768px;top:291px;font-family:'Liberation Sans',sans-serif;font-size:34px;line-height:38px;color:#000;font-weight:normal;">Éditeur de code</span>
<div style="position:absolute;left:1648px;top:340px;width:108px;height:37px;background:#ffff00;"></div>
<span id="t123" class="tx" style="left:1648px;top:340px;font-family:'Liberation Sans',sans-serif;font-size:34px;line-height:38px;color:#000;font-weight:normal;">Outline</span>
<div style="position:absolute;left:905px;top:834px;width:346px;height:38px;background:#ffff00;"></div>
<span id="t124" class="tx" style="left:905px;top:834px;font-family:'Liberation Sans',sans-serif;font-size:34px;line-height:38px;color:#000;font-weight:normal;">Console (entrée/sortie)</span>
</body></html>
